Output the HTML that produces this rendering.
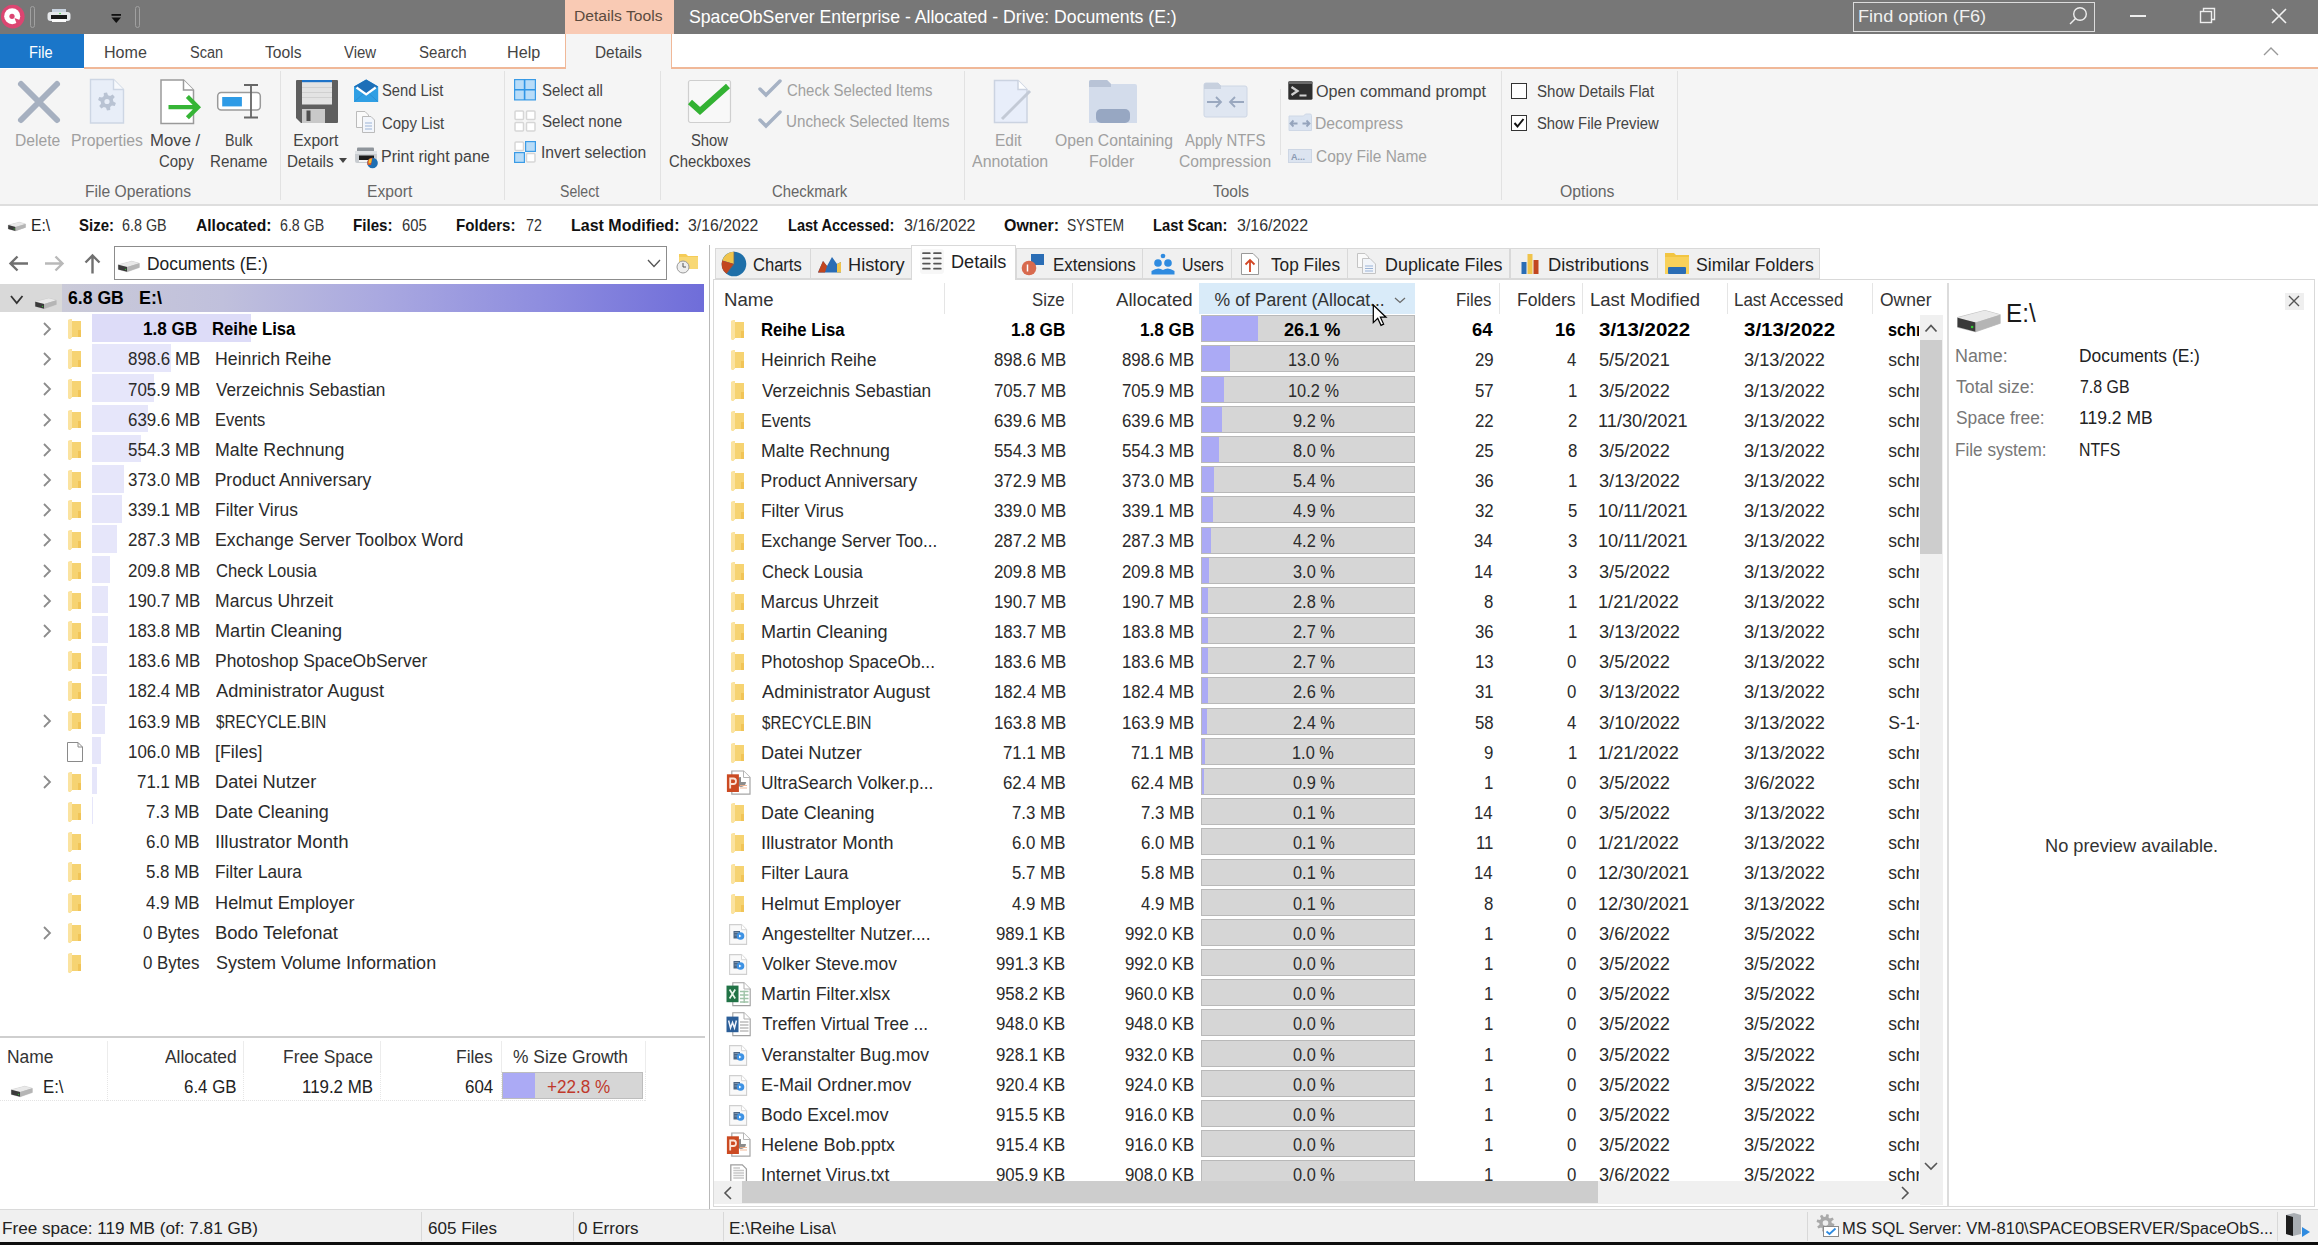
<!DOCTYPE html><html><head><meta charset="utf-8"><style>
*{box-sizing:border-box}
html,body{margin:0;padding:0}
body{width:2318px;height:1245px;position:relative;overflow:hidden;background:#fff;font-family:"Liberation Sans",sans-serif;color:#1a1a1a}
.a{position:absolute}
.t{position:absolute;white-space:nowrap;line-height:1}
svg{position:absolute;overflow:visible}
</style></head><body>
<div class="a" style="left:0px;top:0px;width:2318px;height:34px;background:#777777"></div>
<svg style="left:0px;top:1px" width="28" height="30" viewBox="0 0 28 30"><circle cx="12.8" cy="15.6" r="11.8" fill="#dc4571"/><circle cx="12.2" cy="15.2" r="8" fill="#fff"/><circle cx="12" cy="15.3" r="2.6" fill="#dc4571"/><path d="M14.5 17 L21 19.5 L17 23.5 Z" fill="#dc4571"/></svg>
<div class="a" style="left:30px;top:6px;width:4.5px;height:22px;border:1px solid #a0a0a0;border-radius:2.5px"></div>
<svg style="left:47px;top:8px" width="24" height="17" viewBox="0 0 24 17"><rect x="5" y="1" width="14" height="4" fill="#c9d3df"/><rect x="0.5" y="4" width="23" height="9" rx="3" fill="#e6e8eb"/><rect x="4" y="7" width="16" height="4" fill="#1b1b1b"/><rect x="5" y="11" width="14" height="3" fill="#fafafa"/><circle cx="13" cy="5.5" r="0.8" fill="#3c3"/></svg>
<svg style="left:111px;top:14px" width="11" height="10" viewBox="0 0 11 10"><rect x="0.5" y="0" width="9.5" height="1.8" fill="#111"/><path d="M0.5 3.5 H10 L5.25 9 Z" fill="#111"/></svg>
<div class="a" style="left:135px;top:6px;width:4.5px;height:22px;border:1px solid #a0a0a0;border-radius:2.5px"></div>
<div class="a" style="left:565px;top:0px;width:109px;height:34px;background:#f9cab4"></div>
<div class="t" style="left:574.28px;top:8.25px;font-size:15.3px;color:#5b4a3e;transform:scaleX(1.0236);transform-origin:0 0;">Details Tools</div>
<div class="t" style="left:689.30px;top:8.39px;font-size:18.2px;color:#ffffff;transform:scaleX(0.9709);transform-origin:0 0;">SpaceObServer Enterprise - Allocated - Drive: Documents (E:)</div>
<div class="a" style="left:1853px;top:2px;width:242px;height:30px;border:1.3px solid #dcdcdc"></div>
<div class="t" style="left:1857.94px;top:7.64px;font-size:17.2px;color:#f0f0f0;transform:scaleX(1.0561);transform-origin:0 0;">Find option (F6)</div>
<svg style="left:2068px;top:6px" width="20" height="20" viewBox="0 0 20 20"><circle cx="12" cy="8" r="6.3" fill="none" stroke="#eee" stroke-width="1.4"/><path d="M7.5 12.5 L2 18" stroke="#eee" stroke-width="1.4"/></svg>
<div class="a" style="left:2130px;top:15px;width:16px;height:1.5px;background:#eee"></div>
<svg style="left:2199px;top:7px" width="18" height="18" viewBox="0 0 18 18"><rect x="1.5" y="4.5" width="11" height="11" fill="none" stroke="#eee" stroke-width="1.4"/><path d="M4.5 4.5 V1.5 H15.5 V12.5 H12.5" fill="none" stroke="#eee" stroke-width="1.4"/></svg>
<svg style="left:2270px;top:7px" width="18" height="18" viewBox="0 0 18 18"><path d="M2 2 L16 16 M16 2 L2 16" stroke="#f2f2f2" stroke-width="1.6"/></svg>
<div class="a" style="left:0px;top:34px;width:2318px;height:34px;background:#ffffff"></div>
<div class="a" style="left:0px;top:34px;width:84px;height:34px;background:#1a76c9"></div>
<div class="t" style="left:29.29px;top:45.16px;font-size:16px;color:#ffffff;transform:scaleX(0.9123);transform-origin:0 0;">File</div>
<div class="t" style="left:104.09px;top:45.16px;font-size:16px;color:#444444;transform:scaleX(1.0052);transform-origin:0 0;">Home</div>
<div class="t" style="left:189.70px;top:45.16px;font-size:16px;color:#444444;transform:scaleX(0.9081);transform-origin:0 0;">Scan</div>
<div class="t" style="left:264.90px;top:45.16px;font-size:16px;color:#444444;transform:scaleX(0.9772);transform-origin:0 0;">Tools</div>
<div class="t" style="left:344.30px;top:45.16px;font-size:16px;color:#444444;transform:scaleX(0.9358);transform-origin:0 0;">View</div>
<div class="t" style="left:419.20px;top:45.16px;font-size:16px;color:#444444;transform:scaleX(0.9398);transform-origin:0 0;">Search</div>
<div class="t" style="left:507.29px;top:45.16px;font-size:16px;color:#444444;transform:scaleX(1.0091);transform-origin:0 0;">Help</div>
<div class="a" style="left:84px;top:67.4px;width:481px;height:1.3px;background:#f0b898"></div>
<div class="a" style="left:672px;top:67.4px;width:1646px;height:1.3px;background:#f0b898"></div>
<div class="a" style="left:565px;top:34px;width:107px;height:35px;background:#f5f5f5;border-left:1px solid #f0b898;border-right:1px solid #f0b898"></div>
<div class="t" style="left:594.54px;top:45.16px;font-size:16px;color:#444444;transform:scaleX(0.9602);transform-origin:0 0;">Details</div>
<svg style="left:2263px;top:46.5px" width="16" height="9"><path d="M1 8 L8 1 L15 8" fill="none" stroke="#999" stroke-width="1.4"/></svg>
<div class="a" style="left:0px;top:69px;width:2318px;height:135px;background:#f5f5f5"></div>
<div class="a" style="left:0px;top:204px;width:2318px;height:1.5px;background:#dedede"></div>
<div class="a" style="left:279.5px;top:71px;width:1px;height:129px;background:#e2e2e2"></div>
<div class="a" style="left:503.8px;top:71px;width:1px;height:129px;background:#e2e2e2"></div>
<div class="a" style="left:659.5px;top:71px;width:1px;height:129px;background:#e2e2e2"></div>
<div class="a" style="left:964.3px;top:71px;width:1px;height:129px;background:#e2e2e2"></div>
<div class="a" style="left:1501px;top:71px;width:1px;height:129px;background:#e2e2e2"></div>
<div class="a" style="left:1677.2px;top:71px;width:1px;height:129px;background:#e2e2e2"></div>
<div class="a" style="left:1280px;top:89px;width:1px;height:66px;background:#e2e2e2"></div>
<div class="t" style="left:85.20px;top:183.59px;font-size:15.6px;color:#666666;transform:scaleX(1.0034);transform-origin:0 0;">File Operations</div>
<div class="t" style="left:366.50px;top:183.59px;font-size:15.6px;color:#666666;transform:scaleX(1.0037);transform-origin:0 0;">Export</div>
<div class="t" style="left:559.90px;top:183.59px;font-size:15.6px;color:#666666;transform:scaleX(0.9021);transform-origin:0 0;">Select</div>
<div class="t" style="left:772.40px;top:183.59px;font-size:15.6px;color:#666666;transform:scaleX(0.9550);transform-origin:0 0;">Checkmark</div>
<div class="t" style="left:1212.70px;top:183.59px;font-size:15.6px;color:#666666;transform:scaleX(0.9917);transform-origin:0 0;">Tools</div>
<div class="t" style="left:1560.30px;top:183.59px;font-size:15.6px;color:#666666;transform:scaleX(1.0140);transform-origin:0 0;">Options</div>
<svg style="left:17px;top:80px" width="44" height="44" viewBox="0 0 44 44"><path d="M4 4 L40 40 M40 4 L4 40" stroke="#a6b0c0" stroke-width="6" stroke-linecap="round"/></svg>
<div class="t" style="left:15.00px;top:132.79px;font-size:15.6px;color:#a0a0a0;transform:scaleX(1.0022);transform-origin:0 0;">Delete</div>
<svg style="left:89px;top:78px" width="37" height="47" viewBox="0 0 37 47"><path d="M1.5 1.5 H24.5 L34.5 11.5 V45 H1.5 Z" fill="#e8eef8" stroke="#cdd6e4" stroke-width="1.4"/><path d="M24.5 1.5 V11.5 H34.5" fill="#f7f9fc" stroke="#cdd6e4" stroke-width="1.4"/><path d="M24.30 23.50 L26.89 24.91 L25.79 28.00 L22.90 27.46 L21.15 28.96 L21.23 31.90 L18.00 32.50 L17.01 29.72 L14.85 28.96 L12.34 30.49 L10.21 28.00 L12.12 25.76 L11.70 23.50 L9.11 22.09 L10.21 19.00 L13.10 19.54 L14.85 18.04 L14.77 15.10 L18.00 14.50 L18.99 17.28 L21.15 18.04 L23.66 16.51 L25.79 19.00 L23.88 21.24 Z M20.60 23.50 A2.6 2.6 0 1 0 15.40 23.50 A2.6 2.6 0 1 0 20.60 23.50 Z" fill="#b9c3d3" fill-rule="evenodd"/></svg>
<div class="t" style="left:70.69px;top:132.79px;font-size:15.6px;color:#a0a0a0;transform:scaleX(1.0103);transform-origin:0 0;">Properties</div>
<svg style="left:159px;top:78px" width="44" height="47" viewBox="0 0 44 47"><path d="M2 2 H24.5 L34.5 12 V45.5 H2 Z" fill="#ffffff" stroke="#9a9a9a" stroke-width="1.5"/><path d="M24.5 2 V12 H34.5" fill="#fff" stroke="#9a9a9a" stroke-width="1.5"/><path d="M9.5 29.2 H39 M28.4 18.6 L39 29.2 L28.4 39.8" fill="none" stroke="#36b536" stroke-width="4.3" stroke-linejoin="miter"/></svg>
<div class="t" style="left:150.43px;top:132.79px;font-size:15.6px;color:#444444;transform:scaleX(1.0739);transform-origin:0 0;">Move /</div>
<div class="t" style="left:158.70px;top:153.59px;font-size:15.6px;color:#444444;transform:scaleX(0.9589);transform-origin:0 0;">Copy</div>
<svg style="left:216px;top:84px" width="46" height="36" viewBox="0 0 46 36"><rect x="1.7" y="8.5" width="42.6" height="17.6" rx="3.5" fill="#fff" stroke="#9a9a9a" stroke-width="1.5"/><rect x="6.2" y="13" width="19.7" height="9.4" fill="#2e9be6"/><path d="M28 1 H42 M35 1 V33.5 M28 33.5 H42" stroke="#666" stroke-width="1.8"/></svg>
<div class="t" style="left:224.59px;top:132.79px;font-size:15.6px;color:#444444;transform:scaleX(0.9141);transform-origin:0 0;">Bulk</div>
<div class="t" style="left:209.63px;top:153.59px;font-size:15.6px;color:#444444;transform:scaleX(0.9726);transform-origin:0 0;">Rename</div>
<svg style="left:296px;top:80px" width="42" height="43" viewBox="0 0 42 43"><path d="M0 1 Q0 0 1 0 H41 Q42 0 42 1 V42 Q42 43 41 43 H5 L0 38 Z" fill="#5e5e5e"/><rect x="6" y="0.5" width="30" height="24" fill="#e3e3e3"/><rect x="6" y="0" width="30" height="2.2" fill="#1e73c8"/><path d="M6 7.5 H36 M6 12.5 H36 M6 17.5 H36" stroke="#d0d0d0" stroke-width="1.2"/><rect x="6" y="29" width="23" height="14" fill="#c9c9c9"/><rect x="10.5" y="30.5" width="4" height="10.5" fill="#4e4e4e"/></svg>
<div class="t" style="left:293.20px;top:132.79px;font-size:15.6px;color:#444444;">Export</div>
<div class="t" style="left:287.02px;top:153.59px;font-size:15.6px;color:#444444;transform:scaleX(0.9772);transform-origin:0 0;">Details</div>
<svg style="left:339px;top:158px" width="9" height="6" viewBox="0 0 9 6"><path d="M0 0 H8 L4 5 Z" fill="#444"/></svg>
<svg style="left:354px;top:79px" width="25" height="24" viewBox="0 0 25 24"><path d="M0 7.5 L12.2 0.5 L24.2 7.5 V23 H0 Z" fill="#2f9fe4"/><path d="M0 7.5 L12.2 0.5 L24.2 7.5 L12.2 14 Z" fill="#1d6fb8"/><path d="M2.5 8.5 L12.2 15.5 L21.7 8.5" fill="none" stroke="#ffffff" stroke-width="2.2"/><path d="M0.5 22.5 L9 15 M23.7 22.5 L15.5 15" stroke="#2a8fd3" stroke-width="1"/></svg>
<div class="t" style="left:382.20px;top:83.39px;font-size:15.6px;color:#444444;transform:scaleX(0.9454);transform-origin:0 0;">Send List</div>
<svg style="left:355px;top:110px" width="22" height="24" viewBox="0 0 22 24"><path d="M1.5 1.5 H10 L13.5 5 V17.5 H1.5 Z" fill="#fafafa" stroke="#bbb"/><path d="M7.5 6.5 H16 L19.5 10 V22.5 H7.5 Z" fill="#f3f6fb" stroke="#bbb"/><path d="M10 13 H17 M10 16 H17 M10 19 H17" stroke="#9bb3d6"/></svg>
<div class="t" style="left:382.20px;top:116.29px;font-size:15.6px;color:#444444;transform:scaleX(0.9578);transform-origin:0 0;">Copy List</div>
<svg style="left:354px;top:146px" width="26" height="23" viewBox="0 0 26 23"><rect x="3" y="1.5" width="17" height="5" rx="1" fill="#8f959b"/><rect x="1" y="5" width="22" height="12" rx="2" fill="#c8ccd0"/><rect x="1" y="5" width="22" height="3" fill="#dfe2e5"/><rect x="5" y="9.5" width="15" height="4.5" fill="#1c1c1c"/><rect x="5" y="14" width="14" height="2" fill="#f4f4f4"/><circle cx="18.5" cy="17" r="5.3" fill="#1f6fb2"/><path d="M18.5 11.7 A5.3 5.3 0 0 0 13.6 19 L17 19 Z" fill="#d9532c"/><path d="M15 13.5 L18 12.5 L17 17 L14.5 17.5 Z" fill="#f2c230"/></svg>
<div class="t" style="left:381.17px;top:148.89px;font-size:15.6px;color:#444444;transform:scaleX(1.0281);transform-origin:0 0;">Print right pane</div>
<svg style="left:514px;top:79px" width="22" height="21.5" viewBox="0 0 22 21.5"><rect x="0.6" y="0.6" width="20.8" height="20.3" fill="#b8dcf8" stroke="#3a9be6" stroke-width="1.2"/><path d="M10.6 0.6 V21 M0.6 10.7 H21.4" stroke="#2f95e6" stroke-width="1.6"/></svg>
<div class="t" style="left:541.80px;top:82.69px;font-size:15.6px;color:#444444;transform:scaleX(0.9616);transform-origin:0 0;">Select all</div>
<svg style="left:514px;top:110px" width="22" height="22" viewBox="0 0 22 22"><rect x="1" y="1" width="8.5" height="8.5" rx="1" fill="#fff" stroke="#d6d6d6" stroke-width="1.5"/><rect x="12.5" y="1" width="8.5" height="8.5" rx="1" fill="#fff" stroke="#d6d6d6" stroke-width="1.5"/><rect x="1" y="12.5" width="8.5" height="8.5" rx="1" fill="#fff" stroke="#d6d6d6" stroke-width="1.5"/><rect x="12.5" y="12.5" width="8.5" height="8.5" rx="1" fill="#fff" stroke="#d6d6d6" stroke-width="1.5"/></svg>
<div class="t" style="left:541.80px;top:114.39px;font-size:15.6px;color:#444444;transform:scaleX(0.9720);transform-origin:0 0;">Select none</div>
<svg style="left:514px;top:141px" width="22" height="22" viewBox="0 0 22 22"><rect x="1" y="1" width="8.5" height="8.5" rx="1" fill="#fff" stroke="#d6d6d6" stroke-width="1.5"/><rect x="11.6" y="0.6" width="9.8" height="9.8" fill="#b8dcf8" stroke="#3a9be6" stroke-width="1.2"/><rect x="0.6" y="11.6" width="9.8" height="9.8" fill="#b8dcf8" stroke="#3a9be6" stroke-width="1.2"/><rect x="12.5" y="12.5" width="8.5" height="8.5" rx="1" fill="#fff" stroke="#d6d6d6" stroke-width="1.5"/></svg>
<div class="t" style="left:540.80px;top:145.39px;font-size:15.6px;color:#444444;transform:scaleX(1.0029);transform-origin:0 0;">Invert selection</div>
<svg style="left:687px;top:79px" width="46" height="46" viewBox="0 0 46 46"><rect x="1.5" y="1.5" width="42" height="42" rx="2" fill="#f8f8f8" stroke="#cfcfcf" stroke-width="1.2"/><path d="M3 23 L13 32 L41 7" fill="none" stroke="#33b233" stroke-width="6"/></svg>
<div class="t" style="left:690.60px;top:132.79px;font-size:15.6px;color:#444444;transform:scaleX(0.9485);transform-origin:0 0;">Show</div>
<div class="t" style="left:668.50px;top:153.59px;font-size:15.6px;color:#444444;transform:scaleX(0.9522);transform-origin:0 0;">Checkboxes</div>
<svg style="left:758px;top:78px" width="24" height="20" viewBox="0 0 24 20"><path d="M2 11 L8 17 L22 3" fill="none" stroke="#a6b2c4" stroke-width="3.5" stroke-linecap="round"/></svg>
<div class="t" style="left:787.00px;top:82.89px;font-size:15.6px;color:#a0a0a0;transform:scaleX(0.9587);transform-origin:0 0;">Check Selected Items</div>
<svg style="left:758px;top:109px" width="24" height="20" viewBox="0 0 24 20"><path d="M2 11 L8 17 L22 3" fill="none" stroke="#a6b2c4" stroke-width="3.5" stroke-linecap="round"/></svg>
<div class="t" style="left:786.03px;top:113.89px;font-size:15.6px;color:#a0a0a0;transform:scaleX(0.9722);transform-origin:0 0;">Uncheck Selected Items</div>
<svg style="left:993px;top:79px" width="42" height="46" viewBox="0 0 42 46"><path d="M1.5 1.5 H25 L34 10.5 V43.5 H1.5 Z" fill="#e8eefa" stroke="#cbd3e1" stroke-width="1.5"/><path d="M25 1.5 V10.5 H34" fill="#fff" stroke="#cbd3e1" stroke-width="1.5"/><path d="M9 40 L37 12" stroke="#c3cad6" stroke-width="3"/></svg>
<div class="t" style="left:995.31px;top:132.79px;font-size:15.6px;color:#a0a0a0;transform:scaleX(0.9910);transform-origin:0 0;">Edit</div>
<div class="t" style="left:972.10px;top:153.59px;font-size:15.6px;color:#a0a0a0;transform:scaleX(1.0218);transform-origin:0 0;">Annotation</div>
<svg style="left:1088px;top:79px" width="50" height="46" viewBox="0 0 50 46"><path d="M1 3 Q1 1 3 1 H19 L23 5 H47 Q49 5 49 7 V44 H1 Z" fill="#d3dceb"/><path d="M1 3 Q1 1 3 1 H19 L23 5 V8 H1 Z" fill="#b8c3d6"/><rect x="8" y="30" width="34" height="14" rx="5" fill="#97a7c2"/></svg>
<div class="t" style="left:1054.70px;top:132.79px;font-size:15.6px;color:#a0a0a0;transform:scaleX(1.0089);transform-origin:0 0;">Open Containing</div>
<div class="t" style="left:1089.27px;top:153.59px;font-size:15.6px;color:#a0a0a0;transform:scaleX(1.0254);transform-origin:0 0;">Folder</div>
<svg style="left:1203px;top:82px" width="45" height="36" viewBox="0 0 45 36"><path d="M1 3 Q1 1 3 1 H15 L18 4 H42 Q44 4 44 6 V33 Q44 35 42 35 H3 Q1 35 1 33 Z" fill="#dfe6f1" stroke="#cdd6e4"/><path d="M1 3 Q1 1 3 1 H15 L18 4 V7 H1 Z" fill="#c7d0de"/><path d="M4 20 H18 M13 15 L18 20 L13 25 M41 20 H27 M32 15 L27 20 L32 25" fill="none" stroke="#9aa8bf" stroke-width="1.8"/></svg>
<div class="t" style="left:1184.70px;top:132.79px;font-size:15.6px;color:#a0a0a0;transform:scaleX(0.9563);transform-origin:0 0;">Apply NTFS</div>
<div class="t" style="left:1179.20px;top:153.59px;font-size:15.6px;color:#a0a0a0;transform:scaleX(1.0023);transform-origin:0 0;">Compression</div>
<svg style="left:1288px;top:81px" width="25" height="19" viewBox="0 0 25 19"><rect x="0.3" y="0.3" width="24.2" height="18.4" rx="1.5" fill="#2e2e2e"/><rect x="0.3" y="0.3" width="24.2" height="2.6" rx="1" fill="#6a6a6a"/><path d="M3.5 6 L9.5 10 L3.5 14" fill="none" stroke="#d0d0d0" stroke-width="2.3"/><path d="M11.5 14.5 H18.5" stroke="#d0d0d0" stroke-width="2"/></svg>
<div class="t" style="left:1316.40px;top:83.69px;font-size:15.6px;color:#444444;transform:scaleX(1.0372);transform-origin:0 0;">Open command prompt</div>
<svg style="left:1288px;top:113px" width="25" height="19" viewBox="0 0 25 19"><path d="M1 3 H15.5 L17.5 1 H22 Q23.5 1 23.5 2.5 V17.5 H1 Z" fill="#dbe4f1" stroke="#cfd8e6"/><path d="M2.5 10.5 H9.5 M5.5 7.5 L2.5 10.5 L5.5 13.5 M21.5 10.5 H14.5 M18.5 7.5 L21.5 10.5 L18.5 13.5" fill="none" stroke="#95a4bc" stroke-width="1.8"/></svg>
<div class="t" style="left:1315.39px;top:116.19px;font-size:15.6px;color:#a0a0a0;transform:scaleX(1.0054);transform-origin:0 0;">Decompress</div>
<svg style="left:1288px;top:149px" width="25" height="14" viewBox="0 0 25 14"><rect x="0.5" y="0.5" width="23" height="13" fill="#dce4f0" stroke="#cdd6e4"/><text x="3" y="11" font-family="Liberation Sans" font-size="9" font-weight="bold" fill="#8a9ab3">A...</text></svg>
<div class="t" style="left:1316.40px;top:148.69px;font-size:15.6px;color:#a0a0a0;transform:scaleX(0.9926);transform-origin:0 0;">Copy File Name</div>
<div class="a" style="left:1511px;top:82.5px;width:16px;height:16px;border:1.3px solid #333;background:#fff"></div>
<div class="t" style="left:1537.10px;top:83.69px;font-size:15.6px;color:#444444;transform:scaleX(0.9656);transform-origin:0 0;">Show Details Flat</div>
<div class="a" style="left:1511px;top:115px;width:16px;height:16px;border:1.3px solid #333;background:#fff"></div>
<svg style="left:1513px;top:117px" width="12" height="12" viewBox="0 0 12 12"><path d="M1.5 6 L4.5 9.5 L10.5 2" fill="none" stroke="#111" stroke-width="2"/></svg>
<div class="t" style="left:1537.10px;top:116.19px;font-size:15.6px;color:#444444;transform:scaleX(0.9488);transform-origin:0 0;">Show File Preview</div>
<svg style="left:8px;top:221.5px" width="17.76" height="9.25" viewBox="0 0 24 12.5"><path d="M0.3 4.2 L15.3 0.3 L23.7 2.6 V7.3 L10.2 12 L0.3 9.4 Z" fill="#c4c4c4" stroke="#c4c4c4" stroke-width="0.6" stroke-linejoin="round"/><path d="M0.3 4.2 L15.3 0.3 L23.7 2.6 L10.2 6.8 Z" fill="#e9e9e9"/><path d="M0.3 4.2 L10.2 6.8 V12 L0.3 9.4 Z" fill="#3a3a3a"/><path d="M10.2 6.8 L23.7 2.6 V7.3 L10.2 12 Z" fill="#b5b5b5"/><circle cx="8.3" cy="9.3" r="0.7" fill="#3c3"/></svg>
<div class="t" style="left:31.00px;top:218.41px;font-size:15.7px;color:#222;">E:\</div>
<div class="t" style="left:78.50px;top:218.41px;font-size:15.7px;color:#111;font-weight:bold;transform:scaleX(0.9551);transform-origin:0 0;">Size:</div>
<div class="t" style="left:122.00px;top:218.41px;font-size:15.7px;color:#333;transform:scaleX(0.9138);transform-origin:0 0;">6.8 GB</div>
<div class="t" style="left:195.70px;top:218.41px;font-size:15.7px;color:#111;font-weight:bold;transform:scaleX(0.9945);transform-origin:0 0;">Allocated:</div>
<div class="t" style="left:280.30px;top:218.41px;font-size:15.7px;color:#333;transform:scaleX(0.9076);transform-origin:0 0;">6.8 GB</div>
<div class="t" style="left:353.03px;top:218.41px;font-size:15.7px;color:#111;font-weight:bold;transform:scaleX(0.9652);transform-origin:0 0;">Files:</div>
<div class="t" style="left:402.30px;top:218.41px;font-size:15.7px;color:#333;transform:scaleX(0.9414);transform-origin:0 0;">605</div>
<div class="t" style="left:456.24px;top:218.41px;font-size:15.7px;color:#111;font-weight:bold;transform:scaleX(0.9621);transform-origin:0 0;">Folders:</div>
<div class="t" style="left:526.10px;top:218.41px;font-size:15.7px;color:#333;transform:scaleX(0.9029);transform-origin:0 0;">72</div>
<div class="t" style="left:570.78px;top:218.41px;font-size:15.7px;color:#111;font-weight:bold;transform:scaleX(1.0202);transform-origin:0 0;">Last Modified:</div>
<div class="t" style="left:688.40px;top:218.41px;font-size:15.7px;color:#333;transform:scaleX(1.0077);transform-origin:0 0;">3/16/2022</div>
<div class="t" style="left:788.07px;top:218.41px;font-size:15.7px;color:#111;font-weight:bold;transform:scaleX(0.9285);transform-origin:0 0;">Last Accessed:</div>
<div class="t" style="left:904.00px;top:218.41px;font-size:15.7px;color:#333;transform:scaleX(1.0251);transform-origin:0 0;">3/16/2022</div>
<div class="t" style="left:1004.00px;top:218.41px;font-size:15.7px;color:#111;font-weight:bold;transform:scaleX(1.0167);transform-origin:0 0;">Owner:</div>
<div class="t" style="left:1067.00px;top:218.41px;font-size:15.7px;color:#333;transform:scaleX(0.8828);transform-origin:0 0;">SYSTEM</div>
<div class="t" style="left:1152.66px;top:218.41px;font-size:15.7px;color:#111;font-weight:bold;transform:scaleX(0.9389);transform-origin:0 0;">Last Scan:</div>
<div class="t" style="left:1236.50px;top:218.41px;font-size:15.7px;color:#333;transform:scaleX(1.0193);transform-origin:0 0;">3/16/2022</div>
<svg style="left:8px;top:254px" width="21" height="19" viewBox="0 0 21 19"><path d="M20 9.5 H3 M9.5 2.5 L2.5 9.5 L9.5 16.5" fill="none" stroke="#707070" stroke-width="2.4"/></svg>
<svg style="left:44px;top:254px" width="21" height="19" viewBox="0 0 21 19"><path d="M1 9.5 H18 M11.5 2.5 L18.5 9.5 L11.5 16.5" fill="none" stroke="#b9b9b9" stroke-width="2.4"/></svg>
<svg style="left:83px;top:253px" width="19" height="21" viewBox="0 0 19 21"><path d="M9.5 20.5 V3 M2.5 9.5 L9.5 2.5 L16.5 9.5" fill="none" stroke="#707070" stroke-width="2.4"/></svg>
<div class="a" style="left:114px;top:245.5px;width:553px;height:34.5px;border:1.3px solid #8c8c8c;background:#fff"></div>
<svg style="left:118px;top:261px" width="21.6" height="11.25" viewBox="0 0 24 12.5"><path d="M0.3 4.2 L15.3 0.3 L23.7 2.6 V7.3 L10.2 12 L0.3 9.4 Z" fill="#c4c4c4" stroke="#c4c4c4" stroke-width="0.6" stroke-linejoin="round"/><path d="M0.3 4.2 L15.3 0.3 L23.7 2.6 L10.2 6.8 Z" fill="#e9e9e9"/><path d="M0.3 4.2 L10.2 6.8 V12 L0.3 9.4 Z" fill="#3a3a3a"/><path d="M10.2 6.8 L23.7 2.6 V7.3 L10.2 12 Z" fill="#b5b5b5"/><circle cx="8.3" cy="9.3" r="0.7" fill="#3c3"/></svg>
<div class="t" style="left:147.11px;top:255.59px;font-size:17.5px;color:#222;transform:scaleX(0.9939);transform-origin:0 0;">Documents (E:)</div>
<svg style="left:647px;top:259px" width="14" height="8.5" viewBox="0 0 14 8.5"><path d="M1 1 L7.0 7.5 L13 1" fill="none" stroke="#555" stroke-width="1.3"/></svg>
<svg style="left:676px;top:252px" width="24" height="22" viewBox="0 0 24 22"><path d="M3 2 H10 L12 4 H22 V17 H3 Z" fill="#f5cc58"/><rect x="3" y="5" width="19" height="12" fill="#f8d874"/><circle cx="7" cy="15" r="6" fill="#eee" stroke="#999" stroke-width="1"/><path d="M7 11 V15 H10" fill="none" stroke="#555" stroke-width="1"/></svg>
<div class="a" style="left:708.7px;top:245px;width:1.2px;height:965px;background:#b9b9b9"></div>
<div class="a" style="left:0px;top:283.6px;width:704px;height:28.4px;background:#d9d9d9"></div>
<div class="a" style="left:62px;top:283.6px;width:642px;height:28.4px;background:linear-gradient(to right,#cacad8 0%,#c0c0dc 25%,#a9a8e0 50%,#8e8ddf 75%,#6f6dd9 100%)"></div>
<svg style="left:9.5px;top:294.5px" width="13.5" height="9" viewBox="0 0 13.5 9"><path d="M1 1 L6.75 8 L12.5 1" fill="none" stroke="#333" stroke-width="1.8"/></svg>
<svg style="left:35px;top:297.5px" width="21.6" height="11.25" viewBox="0 0 24 12.5"><path d="M0.3 4.2 L15.3 0.3 L23.7 2.6 V7.3 L10.2 12 L0.3 9.4 Z" fill="#c4c4c4" stroke="#c4c4c4" stroke-width="0.6" stroke-linejoin="round"/><path d="M0.3 4.2 L15.3 0.3 L23.7 2.6 L10.2 6.8 Z" fill="#e9e9e9"/><path d="M0.3 4.2 L10.2 6.8 V12 L0.3 9.4 Z" fill="#3a3a3a"/><path d="M10.2 6.8 L23.7 2.6 V7.3 L10.2 12 Z" fill="#b5b5b5"/><circle cx="8.3" cy="9.3" r="0.7" fill="#3c3"/></svg>
<div class="t" style="left:68.20px;top:290.29px;font-size:17.5px;color:#000;font-weight:bold;transform:scaleX(1.0073);transform-origin:0 0;">6.8 GB</div>
<div class="t" style="left:138.78px;top:290.29px;font-size:17.5px;color:#000;font-weight:bold;transform:scaleX(1.0233);transform-origin:0 0;">E:\</div>
<div class="a" style="left:92px;top:314.1px;width:159px;height:27.5px;background:#dddcf8"></div>
<svg style="left:42px;top:321.1px" width="10" height="16" viewBox="0 0 10 16"><path d="M2 2 L8 8 L2 14" fill="none" stroke="#8c8c8c" stroke-width="1.8"/></svg>
<svg style="left:67px;top:318.1px" width="16" height="22" viewBox="0 0 16 22"><path d="M1 2 L5 1 L5 3 L14 3 L14 19 L5 19 L3 21 L1 20 Z" fill="#f4cf66"/><path d="M1 2 L5 1 L5 19 L3 21 L1 20 Z" fill="#fbe3a0"/><rect x="5" y="3" width="9" height="16" fill="#f6d372"/><rect x="11" y="12" width="3" height="7" fill="#f1c457"/></svg>
<div class="t" style="left:143.49px;top:321.19px;font-size:17.5px;color:#000;font-weight:bold;transform:scaleX(0.9800);transform-origin:0 0;">1.8 GB</div>
<div class="t" style="left:212.35px;top:321.19px;font-size:17.5px;color:#000;font-weight:bold;transform:scaleX(0.9527);transform-origin:0 0;">Reihe Lisa</div>
<div class="a" style="left:92px;top:344.28px;width:79.3px;height:27.5px;background:#e6e6fa"></div>
<svg style="left:42px;top:351.28px" width="10" height="16" viewBox="0 0 10 16"><path d="M2 2 L8 8 L2 14" fill="none" stroke="#8c8c8c" stroke-width="1.8"/></svg>
<svg style="left:67px;top:348.28px" width="16" height="22" viewBox="0 0 16 22"><path d="M1 2 L5 1 L5 3 L14 3 L14 19 L5 19 L3 21 L1 20 Z" fill="#f4cf66"/><path d="M1 2 L5 1 L5 19 L3 21 L1 20 Z" fill="#fbe3a0"/><rect x="5" y="3" width="9" height="16" fill="#f6d372"/><rect x="11" y="12" width="3" height="7" fill="#f1c457"/></svg>
<div class="t" style="left:127.67px;top:351.37px;font-size:17.5px;color:#2b2b2b;transform:scaleX(0.9650);transform-origin:0 0;">898.6 MB</div>
<div class="t" style="left:214.69px;top:351.37px;font-size:17.5px;color:#2b2b2b;transform:scaleX(1.0129);transform-origin:0 0;">Heinrich Reihe</div>
<div class="a" style="left:92px;top:374.46px;width:62px;height:27.5px;background:#e6e6fa"></div>
<svg style="left:42px;top:381.46px" width="10" height="16" viewBox="0 0 10 16"><path d="M2 2 L8 8 L2 14" fill="none" stroke="#8c8c8c" stroke-width="1.8"/></svg>
<svg style="left:67px;top:378.46px" width="16" height="22" viewBox="0 0 16 22"><path d="M1 2 L5 1 L5 3 L14 3 L14 19 L5 19 L3 21 L1 20 Z" fill="#f4cf66"/><path d="M1 2 L5 1 L5 19 L3 21 L1 20 Z" fill="#fbe3a0"/><rect x="5" y="3" width="9" height="16" fill="#f6d372"/><rect x="11" y="12" width="3" height="7" fill="#f1c457"/></svg>
<div class="t" style="left:127.67px;top:381.55px;font-size:17.5px;color:#2b2b2b;transform:scaleX(0.9650);transform-origin:0 0;">705.9 MB</div>
<div class="t" style="left:215.70px;top:381.55px;font-size:17.5px;color:#2b2b2b;transform:scaleX(0.9833);transform-origin:0 0;">Verzeichnis Sebastian</div>
<div class="a" style="left:92px;top:404.64px;width:56.4px;height:27.5px;background:#e6e6fa"></div>
<svg style="left:42px;top:411.64px" width="10" height="16" viewBox="0 0 10 16"><path d="M2 2 L8 8 L2 14" fill="none" stroke="#8c8c8c" stroke-width="1.8"/></svg>
<svg style="left:67px;top:408.64px" width="16" height="22" viewBox="0 0 16 22"><path d="M1 2 L5 1 L5 3 L14 3 L14 19 L5 19 L3 21 L1 20 Z" fill="#f4cf66"/><path d="M1 2 L5 1 L5 19 L3 21 L1 20 Z" fill="#fbe3a0"/><rect x="5" y="3" width="9" height="16" fill="#f6d372"/><rect x="11" y="12" width="3" height="7" fill="#f1c457"/></svg>
<div class="t" style="left:127.67px;top:411.73px;font-size:17.5px;color:#2b2b2b;transform:scaleX(0.9650);transform-origin:0 0;">639.6 MB</div>
<div class="t" style="left:214.76px;top:411.73px;font-size:17.5px;color:#2b2b2b;transform:scaleX(0.9384);transform-origin:0 0;">Events</div>
<div class="a" style="left:92px;top:434.82px;width:49.3px;height:27.5px;background:#e6e6fa"></div>
<svg style="left:42px;top:441.82px" width="10" height="16" viewBox="0 0 10 16"><path d="M2 2 L8 8 L2 14" fill="none" stroke="#8c8c8c" stroke-width="1.8"/></svg>
<svg style="left:67px;top:438.82px" width="16" height="22" viewBox="0 0 16 22"><path d="M1 2 L5 1 L5 3 L14 3 L14 19 L5 19 L3 21 L1 20 Z" fill="#f4cf66"/><path d="M1 2 L5 1 L5 19 L3 21 L1 20 Z" fill="#fbe3a0"/><rect x="5" y="3" width="9" height="16" fill="#f6d372"/><rect x="11" y="12" width="3" height="7" fill="#f1c457"/></svg>
<div class="t" style="left:127.67px;top:441.91px;font-size:17.5px;color:#2b2b2b;transform:scaleX(0.9650);transform-origin:0 0;">554.3 MB</div>
<div class="t" style="left:214.68px;top:441.91px;font-size:17.5px;color:#2b2b2b;transform:scaleX(1.0151);transform-origin:0 0;">Malte Rechnung</div>
<div class="a" style="left:92px;top:465.0px;width:32px;height:27.5px;background:#e6e6fa"></div>
<svg style="left:42px;top:472.0px" width="10" height="16" viewBox="0 0 10 16"><path d="M2 2 L8 8 L2 14" fill="none" stroke="#8c8c8c" stroke-width="1.8"/></svg>
<svg style="left:67px;top:469.0px" width="16" height="22" viewBox="0 0 16 22"><path d="M1 2 L5 1 L5 3 L14 3 L14 19 L5 19 L3 21 L1 20 Z" fill="#f4cf66"/><path d="M1 2 L5 1 L5 19 L3 21 L1 20 Z" fill="#fbe3a0"/><rect x="5" y="3" width="9" height="16" fill="#f6d372"/><rect x="11" y="12" width="3" height="7" fill="#f1c457"/></svg>
<div class="t" style="left:127.67px;top:472.09px;font-size:17.5px;color:#2b2b2b;transform:scaleX(0.9650);transform-origin:0 0;">373.0 MB</div>
<div class="t" style="left:214.70px;top:472.09px;font-size:17.5px;color:#2b2b2b;">Product Anniversary</div>
<div class="a" style="left:92px;top:495.18px;width:29.7px;height:27.5px;background:#e6e6fa"></div>
<svg style="left:42px;top:502.18px" width="10" height="16" viewBox="0 0 10 16"><path d="M2 2 L8 8 L2 14" fill="none" stroke="#8c8c8c" stroke-width="1.8"/></svg>
<svg style="left:67px;top:499.18px" width="16" height="22" viewBox="0 0 16 22"><path d="M1 2 L5 1 L5 3 L14 3 L14 19 L5 19 L3 21 L1 20 Z" fill="#f4cf66"/><path d="M1 2 L5 1 L5 19 L3 21 L1 20 Z" fill="#fbe3a0"/><rect x="5" y="3" width="9" height="16" fill="#f6d372"/><rect x="11" y="12" width="3" height="7" fill="#f1c457"/></svg>
<div class="t" style="left:127.67px;top:502.27px;font-size:17.5px;color:#2b2b2b;transform:scaleX(0.9650);transform-origin:0 0;">339.1 MB</div>
<div class="t" style="left:214.70px;top:502.27px;font-size:17.5px;color:#2b2b2b;transform:scaleX(0.9957);transform-origin:0 0;">Filter Virus</div>
<div class="a" style="left:92px;top:525.36px;width:25px;height:27.5px;background:#e6e6fa"></div>
<svg style="left:42px;top:532.36px" width="10" height="16" viewBox="0 0 10 16"><path d="M2 2 L8 8 L2 14" fill="none" stroke="#8c8c8c" stroke-width="1.8"/></svg>
<svg style="left:67px;top:529.36px" width="16" height="22" viewBox="0 0 16 22"><path d="M1 2 L5 1 L5 3 L14 3 L14 19 L5 19 L3 21 L1 20 Z" fill="#f4cf66"/><path d="M1 2 L5 1 L5 19 L3 21 L1 20 Z" fill="#fbe3a0"/><rect x="5" y="3" width="9" height="16" fill="#f6d372"/><rect x="11" y="12" width="3" height="7" fill="#f1c457"/></svg>
<div class="t" style="left:127.67px;top:532.45px;font-size:17.5px;color:#2b2b2b;transform:scaleX(0.9650);transform-origin:0 0;">287.3 MB</div>
<div class="t" style="left:214.69px;top:532.45px;font-size:17.5px;color:#2b2b2b;transform:scaleX(1.0121);transform-origin:0 0;">Exchange Server Toolbox Word</div>
<div class="a" style="left:92px;top:555.54px;width:17.8px;height:27.5px;background:#e6e6fa"></div>
<svg style="left:42px;top:562.54px" width="10" height="16" viewBox="0 0 10 16"><path d="M2 2 L8 8 L2 14" fill="none" stroke="#8c8c8c" stroke-width="1.8"/></svg>
<svg style="left:67px;top:559.54px" width="16" height="22" viewBox="0 0 16 22"><path d="M1 2 L5 1 L5 3 L14 3 L14 19 L5 19 L3 21 L1 20 Z" fill="#f4cf66"/><path d="M1 2 L5 1 L5 19 L3 21 L1 20 Z" fill="#fbe3a0"/><rect x="5" y="3" width="9" height="16" fill="#f6d372"/><rect x="11" y="12" width="3" height="7" fill="#f1c457"/></svg>
<div class="t" style="left:127.67px;top:562.63px;font-size:17.5px;color:#2b2b2b;transform:scaleX(0.9650);transform-origin:0 0;">209.8 MB</div>
<div class="t" style="left:215.70px;top:562.63px;font-size:17.5px;color:#2b2b2b;transform:scaleX(0.9492);transform-origin:0 0;">Check Lousia</div>
<div class="a" style="left:92px;top:585.72px;width:16.4px;height:27.5px;background:#e6e6fa"></div>
<svg style="left:42px;top:592.72px" width="10" height="16" viewBox="0 0 10 16"><path d="M2 2 L8 8 L2 14" fill="none" stroke="#8c8c8c" stroke-width="1.8"/></svg>
<svg style="left:67px;top:589.72px" width="16" height="22" viewBox="0 0 16 22"><path d="M1 2 L5 1 L5 3 L14 3 L14 19 L5 19 L3 21 L1 20 Z" fill="#f4cf66"/><path d="M1 2 L5 1 L5 19 L3 21 L1 20 Z" fill="#fbe3a0"/><rect x="5" y="3" width="9" height="16" fill="#f6d372"/><rect x="11" y="12" width="3" height="7" fill="#f1c457"/></svg>
<div class="t" style="left:127.67px;top:592.81px;font-size:17.5px;color:#2b2b2b;transform:scaleX(0.9650);transform-origin:0 0;">190.7 MB</div>
<div class="t" style="left:214.70px;top:592.81px;font-size:17.5px;color:#2b2b2b;transform:scaleX(1.0034);transform-origin:0 0;">Marcus Uhrzeit</div>
<div class="a" style="left:92px;top:615.9px;width:15.7px;height:27.5px;background:#e6e6fa"></div>
<svg style="left:42px;top:622.9px" width="10" height="16" viewBox="0 0 10 16"><path d="M2 2 L8 8 L2 14" fill="none" stroke="#8c8c8c" stroke-width="1.8"/></svg>
<svg style="left:67px;top:619.9px" width="16" height="22" viewBox="0 0 16 22"><path d="M1 2 L5 1 L5 3 L14 3 L14 19 L5 19 L3 21 L1 20 Z" fill="#f4cf66"/><path d="M1 2 L5 1 L5 19 L3 21 L1 20 Z" fill="#fbe3a0"/><rect x="5" y="3" width="9" height="16" fill="#f6d372"/><rect x="11" y="12" width="3" height="7" fill="#f1c457"/></svg>
<div class="t" style="left:127.67px;top:622.99px;font-size:17.5px;color:#2b2b2b;transform:scaleX(0.9650);transform-origin:0 0;">183.8 MB</div>
<div class="t" style="left:214.66px;top:622.99px;font-size:17.5px;color:#2b2b2b;transform:scaleX(1.0362);transform-origin:0 0;">Martin Cleaning</div>
<div class="a" style="left:92px;top:646.08px;width:15px;height:27.5px;background:#e6e6fa"></div>
<svg style="left:67px;top:650.08px" width="16" height="22" viewBox="0 0 16 22"><path d="M1 2 L5 1 L5 3 L14 3 L14 19 L5 19 L3 21 L1 20 Z" fill="#f4cf66"/><path d="M1 2 L5 1 L5 19 L3 21 L1 20 Z" fill="#fbe3a0"/><rect x="5" y="3" width="9" height="16" fill="#f6d372"/><rect x="11" y="12" width="3" height="7" fill="#f1c457"/></svg>
<div class="t" style="left:127.67px;top:653.17px;font-size:17.5px;color:#2b2b2b;transform:scaleX(0.9650);transform-origin:0 0;">183.6 MB</div>
<div class="t" style="left:214.70px;top:653.17px;font-size:17.5px;color:#2b2b2b;transform:scaleX(0.9961);transform-origin:0 0;">Photoshop SpaceObServer</div>
<div class="a" style="left:92px;top:676.26px;width:15px;height:27.5px;background:#e6e6fa"></div>
<svg style="left:67px;top:680.26px" width="16" height="22" viewBox="0 0 16 22"><path d="M1 2 L5 1 L5 3 L14 3 L14 19 L5 19 L3 21 L1 20 Z" fill="#f4cf66"/><path d="M1 2 L5 1 L5 19 L3 21 L1 20 Z" fill="#fbe3a0"/><rect x="5" y="3" width="9" height="16" fill="#f6d372"/><rect x="11" y="12" width="3" height="7" fill="#f1c457"/></svg>
<div class="t" style="left:127.67px;top:683.35px;font-size:17.5px;color:#2b2b2b;transform:scaleX(0.9650);transform-origin:0 0;">182.4 MB</div>
<div class="t" style="left:215.70px;top:683.35px;font-size:17.5px;color:#2b2b2b;transform:scaleX(1.0402);transform-origin:0 0;">Administrator August</div>
<div class="a" style="left:92px;top:706.44px;width:13.3px;height:27.5px;background:#e6e6fa"></div>
<svg style="left:42px;top:713.44px" width="10" height="16" viewBox="0 0 10 16"><path d="M2 2 L8 8 L2 14" fill="none" stroke="#8c8c8c" stroke-width="1.8"/></svg>
<svg style="left:67px;top:710.44px" width="16" height="22" viewBox="0 0 16 22"><path d="M1 2 L5 1 L5 3 L14 3 L14 19 L5 19 L3 21 L1 20 Z" fill="#f4cf66"/><path d="M1 2 L5 1 L5 19 L3 21 L1 20 Z" fill="#fbe3a0"/><rect x="5" y="3" width="9" height="16" fill="#f6d372"/><rect x="11" y="12" width="3" height="7" fill="#f1c457"/></svg>
<div class="t" style="left:127.67px;top:713.53px;font-size:17.5px;color:#2b2b2b;transform:scaleX(0.9650);transform-origin:0 0;">163.9 MB</div>
<div class="t" style="left:215.70px;top:713.53px;font-size:17.5px;color:#2b2b2b;transform:scaleX(0.8721);transform-origin:0 0;">$RECYCLE.BIN</div>
<div class="a" style="left:92px;top:736.62px;width:8.8px;height:27.5px;background:#e6e6fa"></div>
<svg style="left:66px;top:740.62px" width="18" height="22" viewBox="0 0 18 22"><path d="M1.5 1.5 H12 L16.5 6 V20.5 H1.5 Z" fill="#fff" stroke="#8a8a8a" stroke-width="1"/><path d="M12 1.5 V6 H16.5" fill="none" stroke="#8a8a8a" stroke-width="1"/></svg>
<div class="t" style="left:127.67px;top:743.71px;font-size:17.5px;color:#2b2b2b;transform:scaleX(0.9650);transform-origin:0 0;">106.0 MB</div>
<div class="t" style="left:214.68px;top:743.71px;font-size:17.5px;color:#2b2b2b;transform:scaleX(1.0154);transform-origin:0 0;">[Files]</div>
<div class="a" style="left:92px;top:766.8px;width:5.4px;height:27.5px;background:#e6e6fa"></div>
<svg style="left:42px;top:773.8px" width="10" height="16" viewBox="0 0 10 16"><path d="M2 2 L8 8 L2 14" fill="none" stroke="#8c8c8c" stroke-width="1.8"/></svg>
<svg style="left:67px;top:770.8px" width="16" height="22" viewBox="0 0 16 22"><path d="M1 2 L5 1 L5 3 L14 3 L14 19 L5 19 L3 21 L1 20 Z" fill="#f4cf66"/><path d="M1 2 L5 1 L5 19 L3 21 L1 20 Z" fill="#fbe3a0"/><rect x="5" y="3" width="9" height="16" fill="#f6d372"/><rect x="11" y="12" width="3" height="7" fill="#f1c457"/></svg>
<div class="t" style="left:137.06px;top:773.89px;font-size:17.5px;color:#2b2b2b;transform:scaleX(0.9650);transform-origin:0 0;">71.1 MB</div>
<div class="t" style="left:214.66px;top:773.89px;font-size:17.5px;color:#2b2b2b;transform:scaleX(1.0412);transform-origin:0 0;">Datei Nutzer</div>
<div class="a" style="left:92px;top:796.98px;width:1.2px;height:27.5px;background:#e6e6fa"></div>
<svg style="left:67px;top:800.98px" width="16" height="22" viewBox="0 0 16 22"><path d="M1 2 L5 1 L5 3 L14 3 L14 19 L5 19 L3 21 L1 20 Z" fill="#f4cf66"/><path d="M1 2 L5 1 L5 19 L3 21 L1 20 Z" fill="#fbe3a0"/><rect x="5" y="3" width="9" height="16" fill="#f6d372"/><rect x="11" y="12" width="3" height="7" fill="#f1c457"/></svg>
<div class="t" style="left:146.45px;top:804.07px;font-size:17.5px;color:#2b2b2b;transform:scaleX(0.9650);transform-origin:0 0;">7.3 MB</div>
<div class="t" style="left:214.68px;top:804.07px;font-size:17.5px;color:#2b2b2b;transform:scaleX(1.0250);transform-origin:0 0;">Date Cleaning</div>
<svg style="left:67px;top:831.16px" width="16" height="22" viewBox="0 0 16 22"><path d="M1 2 L5 1 L5 3 L14 3 L14 19 L5 19 L3 21 L1 20 Z" fill="#f4cf66"/><path d="M1 2 L5 1 L5 19 L3 21 L1 20 Z" fill="#fbe3a0"/><rect x="5" y="3" width="9" height="16" fill="#f6d372"/><rect x="11" y="12" width="3" height="7" fill="#f1c457"/></svg>
<div class="t" style="left:146.45px;top:834.25px;font-size:17.5px;color:#2b2b2b;transform:scaleX(0.9650);transform-origin:0 0;">6.0 MB</div>
<div class="t" style="left:214.64px;top:834.25px;font-size:17.5px;color:#2b2b2b;transform:scaleX(1.0644);transform-origin:0 0;">Illustrator Month</div>
<svg style="left:67px;top:861.34px" width="16" height="22" viewBox="0 0 16 22"><path d="M1 2 L5 1 L5 3 L14 3 L14 19 L5 19 L3 21 L1 20 Z" fill="#f4cf66"/><path d="M1 2 L5 1 L5 19 L3 21 L1 20 Z" fill="#fbe3a0"/><rect x="5" y="3" width="9" height="16" fill="#f6d372"/><rect x="11" y="12" width="3" height="7" fill="#f1c457"/></svg>
<div class="t" style="left:146.45px;top:864.43px;font-size:17.5px;color:#2b2b2b;transform:scaleX(0.9650);transform-origin:0 0;">5.8 MB</div>
<div class="t" style="left:214.72px;top:864.43px;font-size:17.5px;color:#2b2b2b;transform:scaleX(0.9820);transform-origin:0 0;">Filter Laura</div>
<svg style="left:67px;top:891.52px" width="16" height="22" viewBox="0 0 16 22"><path d="M1 2 L5 1 L5 3 L14 3 L14 19 L5 19 L3 21 L1 20 Z" fill="#f4cf66"/><path d="M1 2 L5 1 L5 19 L3 21 L1 20 Z" fill="#fbe3a0"/><rect x="5" y="3" width="9" height="16" fill="#f6d372"/><rect x="11" y="12" width="3" height="7" fill="#f1c457"/></svg>
<div class="t" style="left:146.45px;top:894.61px;font-size:17.5px;color:#2b2b2b;transform:scaleX(0.9650);transform-origin:0 0;">4.9 MB</div>
<div class="t" style="left:214.66px;top:894.61px;font-size:17.5px;color:#2b2b2b;transform:scaleX(1.0391);transform-origin:0 0;">Helmut Employer</div>
<svg style="left:42px;top:924.7px" width="10" height="16" viewBox="0 0 10 16"><path d="M2 2 L8 8 L2 14" fill="none" stroke="#8c8c8c" stroke-width="1.8"/></svg>
<svg style="left:67px;top:921.7px" width="16" height="22" viewBox="0 0 16 22"><path d="M1 2 L5 1 L5 3 L14 3 L14 19 L5 19 L3 21 L1 20 Z" fill="#f4cf66"/><path d="M1 2 L5 1 L5 19 L3 21 L1 20 Z" fill="#fbe3a0"/><rect x="5" y="3" width="9" height="16" fill="#f6d372"/><rect x="11" y="12" width="3" height="7" fill="#f1c457"/></svg>
<div class="t" style="left:142.74px;top:924.79px;font-size:17.5px;color:#2b2b2b;transform:scaleX(0.9650);transform-origin:0 0;">0 Bytes</div>
<div class="t" style="left:214.64px;top:924.79px;font-size:17.5px;color:#2b2b2b;transform:scaleX(1.0553);transform-origin:0 0;">Bodo Telefonat</div>
<svg style="left:67px;top:951.88px" width="16" height="22" viewBox="0 0 16 22"><path d="M1 2 L5 1 L5 3 L14 3 L14 19 L5 19 L3 21 L1 20 Z" fill="#f4cf66"/><path d="M1 2 L5 1 L5 19 L3 21 L1 20 Z" fill="#fbe3a0"/><rect x="5" y="3" width="9" height="16" fill="#f6d372"/><rect x="11" y="12" width="3" height="7" fill="#f1c457"/></svg>
<div class="t" style="left:142.74px;top:954.97px;font-size:17.5px;color:#2b2b2b;transform:scaleX(0.9650);transform-origin:0 0;">0 Bytes</div>
<div class="t" style="left:215.70px;top:954.97px;font-size:17.5px;color:#2b2b2b;transform:scaleX(1.0288);transform-origin:0 0;">System Volume Information</div>
<div class="a" style="left:0px;top:1036px;width:705px;height:1.5px;background:#cfcfcf"></div>
<div class="a" style="left:106.5px;top:1041px;width:1px;height:30px;background:#ececec"></div>
<div class="a" style="left:106.5px;top:1071px;width:1px;height:30px;border-left:1px dotted #e6e6e6"></div>
<div class="a" style="left:243.2px;top:1041px;width:1px;height:30px;background:#ececec"></div>
<div class="a" style="left:243.2px;top:1071px;width:1px;height:30px;border-left:1px dotted #e6e6e6"></div>
<div class="a" style="left:379.5px;top:1041px;width:1px;height:30px;background:#ececec"></div>
<div class="a" style="left:379.5px;top:1071px;width:1px;height:30px;border-left:1px dotted #e6e6e6"></div>
<div class="a" style="left:500.6px;top:1041px;width:1px;height:30px;background:#ececec"></div>
<div class="a" style="left:500.6px;top:1071px;width:1px;height:30px;border-left:1px dotted #e6e6e6"></div>
<div class="a" style="left:645px;top:1041px;width:1px;height:30px;background:#ececec"></div>
<div class="a" style="left:645px;top:1071px;width:1px;height:30px;border-left:1px dotted #e6e6e6"></div>
<div class="t" style="left:6.50px;top:1049.19px;font-size:17.5px;color:#333;transform:scaleX(0.9950);transform-origin:0 0;">Name</div>
<div class="t" style="left:165.00px;top:1049.19px;font-size:17.5px;color:#333;transform:scaleX(0.9950);transform-origin:0 0;">Allocated</div>
<div class="t" style="left:282.72px;top:1049.19px;font-size:17.5px;color:#333;transform:scaleX(0.9950);transform-origin:0 0;">Free Space</div>
<div class="t" style="left:456.19px;top:1049.19px;font-size:17.5px;color:#333;transform:scaleX(0.9950);transform-origin:0 0;">Files</div>
<div class="t" style="left:513.00px;top:1049.19px;font-size:17.5px;color:#333;transform:scaleX(0.9939);transform-origin:0 0;">% Size Growth</div>
<svg style="left:11px;top:1085.5px" width="21.6" height="11.25" viewBox="0 0 24 12.5"><path d="M0.3 4.2 L15.3 0.3 L23.7 2.6 V7.3 L10.2 12 L0.3 9.4 Z" fill="#c4c4c4" stroke="#c4c4c4" stroke-width="0.6" stroke-linejoin="round"/><path d="M0.3 4.2 L15.3 0.3 L23.7 2.6 L10.2 6.8 Z" fill="#e9e9e9"/><path d="M0.3 4.2 L10.2 6.8 V12 L0.3 9.4 Z" fill="#3a3a3a"/><path d="M10.2 6.8 L23.7 2.6 V7.3 L10.2 12 Z" fill="#b5b5b5"/><circle cx="8.3" cy="9.3" r="0.7" fill="#3c3"/></svg>
<div class="t" style="left:42.94px;top:1078.69px;font-size:17.5px;color:#222;transform:scaleX(0.9594);transform-origin:0 0;">E:\</div>
<div class="t" style="left:183.98px;top:1078.69px;font-size:17.5px;color:#222;transform:scaleX(0.9650);transform-origin:0 0;">6.4 GB</div>
<div class="t" style="left:301.62px;top:1078.69px;font-size:17.5px;color:#222;transform:scaleX(0.9650);transform-origin:0 0;">119.2 MB</div>
<div class="t" style="left:464.77px;top:1078.69px;font-size:17.5px;color:#222;transform:scaleX(0.9650);transform-origin:0 0;">604</div>
<div class="a" style="left:502.2px;top:1072.4px;width:140.7px;height:26.4px;background:#d6d6d6;border:1px solid #bdbdbd"></div>
<div class="a" style="left:503.2px;top:1073.4px;width:31.6px;height:24.4px;background:#abaaf5"></div>
<div class="t" style="left:546.60px;top:1078.69px;font-size:17.5px;color:#c0392b;transform:scaleX(0.9775);transform-origin:0 0;">+22.8 %</div>
<div class="a" style="left:0px;top:1100px;width:645px;height:1px;border-top:1px dotted #e3e3e3"></div>
<div class="a" style="left:712.5px;top:278.5px;width:1602px;height:928px;border:1px solid #d9d9d9;background:#fff"></div>
<div class="a" style="left:715px;top:248px;width:95.5px;height:31px;background:#f0f0f0;border:1px solid #d9d9d9"></div>
<div class="a" style="left:809.5px;top:248px;width:102.10000000000002px;height:31px;background:#f0f0f0;border:1px solid #d9d9d9"></div>
<div class="a" style="left:910.6px;top:245px;width:105.19999999999993px;height:35px;background:#fff;border:1px solid #d9d9d9;border-bottom:none"></div>
<div class="a" style="left:1015.8px;top:248px;width:127.60000000000014px;height:31px;background:#f0f0f0;border:1px solid #d9d9d9"></div>
<div class="a" style="left:1142.4px;top:248px;width:89.39999999999986px;height:31px;background:#f0f0f0;border:1px solid #d9d9d9"></div>
<div class="a" style="left:1230.8px;top:248px;width:117.0px;height:31px;background:#f0f0f0;border:1px solid #d9d9d9"></div>
<div class="a" style="left:1346.8px;top:248px;width:163.70000000000005px;height:31px;background:#f0f0f0;border:1px solid #d9d9d9"></div>
<div class="a" style="left:1509.5px;top:248px;width:148.9000000000001px;height:31px;background:#f0f0f0;border:1px solid #d9d9d9"></div>
<div class="a" style="left:1657.4px;top:248px;width:162.29999999999995px;height:31px;background:#f0f0f0;border:1px solid #d9d9d9"></div>
<div class="t" style="left:753.40px;top:257.30px;font-size:17.6px;color:#222;transform:scaleX(0.9400);transform-origin:0 0;">Charts</div>
<div class="t" style="left:848.17px;top:257.30px;font-size:17.6px;color:#222;transform:scaleX(1.0344);transform-origin:0 0;">History</div>
<div class="t" style="left:951.27px;top:254.10px;font-size:17.6px;color:#222;transform:scaleX(1.0306);transform-origin:0 0;">Details</div>
<div class="t" style="left:1052.84px;top:257.30px;font-size:17.6px;color:#222;transform:scaleX(0.9605);transform-origin:0 0;">Extensions</div>
<div class="t" style="left:1181.69px;top:257.30px;font-size:17.6px;color:#222;transform:scaleX(0.9082);transform-origin:0 0;">Users</div>
<div class="t" style="left:1270.50px;top:257.30px;font-size:17.6px;color:#222;transform:scaleX(0.9801);transform-origin:0 0;">Top Files</div>
<div class="t" style="left:1385.28px;top:257.30px;font-size:17.6px;color:#222;transform:scaleX(1.0176);transform-origin:0 0;">Duplicate Files</div>
<div class="t" style="left:1548.46px;top:257.30px;font-size:17.6px;color:#222;transform:scaleX(1.0416);transform-origin:0 0;">Distributions</div>
<div class="t" style="left:1696.30px;top:257.30px;font-size:17.6px;color:#222;transform:scaleX(1.0033);transform-origin:0 0;">Similar Folders</div>
<svg style="left:721px;top:250.5px" width="26" height="26" viewBox="0 0 26 26"><circle cx="13" cy="13" r="12.3" fill="#1f6fa8"/><path d="M13 13 L13 0.7 A12.3 12.3 0 0 0 1.2 9.5 Z" fill="#f0c44c"/><path d="M13 13 L1.2 9.5 A12.3 12.3 0 0 0 5.5 22.8 Z" fill="#c2461f"/><path d="M13 0.7 V13 L5.5 22.8" fill="none" stroke="#666" stroke-width="0.8"/></svg>
<svg style="left:818px;top:256px" width="24" height="17" viewBox="0 0 24 17"><path d="M0 16.5 L5 5 L9 10 L14 1 L19 8 L23 6 V16.5 Z" fill="#2a6db5"/><path d="M5 5 L9 10 L7 16.5 H0 Z" fill="#c2461f"/><path d="M19 8 L23 6 V16.5 H19 Z" fill="#f0c44c"/></svg>
<div class="a" style="left:920px;top:249px;width:24px;height:25px;background:#f7f7f7;border-radius:3px"></div>
<svg style="left:922px;top:251px" width="22" height="20" viewBox="0 0 22 20"><path d="M1 2.2 H7.8 M12 2.2 H18.8 M1 7.4 H7.8 M12 7.4 H18.8 M1 12.6 H7.8 M12 12.6 H18.8 M1 17.7 H7.8 M12 17.7 H18.8" stroke="#555" stroke-width="1.7" stroke-linecap="round"/></svg>
<svg style="left:1021px;top:253px" width="24" height="23" viewBox="0 0 24 23"><rect x="10" y="1" width="13" height="11" fill="#2a6db5"/><path d="M14 12 L10 14" stroke="#2a6db5" stroke-width="2"/><circle cx="8" cy="15" r="7.3" fill="#d86a4e"/><path d="M6.5 11.5 V18.5" stroke="#fff" stroke-width="1.5"/></svg>
<svg style="left:1151px;top:253px" width="24" height="22" viewBox="0 0 24 22"><circle cx="12" cy="3" r="2.3" fill="#2f8be0"/><circle cx="7" cy="10" r="3.8" fill="#2f8be0"/><circle cx="17" cy="10" r="3.8" fill="#2f8be0"/><path d="M0.5 18 Q7 13.5 12 17 Q17 13.5 23.5 18 V21.5 H0.5 Z" fill="#2f8be0"/></svg>
<svg style="left:1240px;top:252px" width="20" height="24" viewBox="0 0 20 24"><path d="M1.5 1.5 H13 L18.5 7 V22.5 H1.5 Z" fill="#fff" stroke="#999"/><path d="M10 20 V8 M5.5 12.5 L10 8 L14.5 12.5" fill="none" stroke="#d24625" stroke-width="1.8"/></svg>
<svg style="left:1356px;top:252px" width="21" height="22" viewBox="0 0 21 22"><path d="M1.5 1.5 H9 L12.5 5 V15.5 H1.5 Z" fill="#fafafa" stroke="#c4c4c4"/><path d="M6.5 6.5 H14 L19.5 12 V21.5 H6.5 Z" fill="#f2f5fa" stroke="#c4c4c4"/><path d="M9 14 H17 M9 16.5 H17 M9 19 H17" stroke="#9bb3d6"/></svg>
<svg style="left:1521px;top:253px" width="18" height="21" viewBox="0 0 18 21"><rect x="0.5" y="9" width="5" height="12" fill="#2a6db5"/><rect x="6.5" y="1" width="5" height="20" fill="#f0c44c"/><rect x="12.5" y="7" width="5" height="14" fill="#c2461f"/></svg>
<svg style="left:1664px;top:252px" width="26" height="23" viewBox="0 0 26 23"><path d="M1 1 H10 L12 3 H25 V22 H1 Z" fill="#f2c542"/><rect x="1" y="5" width="24" height="17" fill="#f8d15a"/><rect x="4" y="15" width="18" height="7" rx="1" fill="#2a6db5"/></svg>
<div class="a" style="left:943.7px;top:283px;width:1px;height:31px;background:#e5e5e5"></div>
<div class="a" style="left:1071.5px;top:283px;width:1px;height:31px;background:#e5e5e5"></div>
<div class="a" style="left:1498.7px;top:283px;width:1px;height:31px;background:#e5e5e5"></div>
<div class="a" style="left:1582px;top:283px;width:1px;height:31px;background:#e5e5e5"></div>
<div class="a" style="left:1727px;top:283px;width:1px;height:31px;background:#e5e5e5"></div>
<div class="a" style="left:1871.8px;top:283px;width:1px;height:31px;background:#e5e5e5"></div>
<div class="a" style="left:1199.2px;top:282.7px;width:216.3px;height:31.5px;background:#d9ebf9"></div>
<div class="t" style="left:723.94px;top:291.70px;font-size:17.6px;color:#333;transform:scaleX(1.0566);transform-origin:0 0;">Name</div>
<div class="t" style="left:1032.30px;top:291.70px;font-size:17.6px;color:#333;transform:scaleX(0.9539);transform-origin:0 0;">Size</div>
<div class="t" style="left:1116.00px;top:291.70px;font-size:17.6px;color:#333;transform:scaleX(1.0588);transform-origin:0 0;">Allocated</div>
<div class="t" style="left:1214.60px;top:291.70px;font-size:17.6px;color:#333;">% of Parent (Allocat...</div>
<svg style="left:1394px;top:296.5px" width="12" height="6.5" viewBox="0 0 12 6.5"><path d="M1 1 L6.0 5.5 L11 1" fill="none" stroke="#6a6a6a" stroke-width="1.3"/></svg>
<div class="t" style="left:1456.35px;top:291.70px;font-size:17.6px;color:#333;transform:scaleX(0.9519);transform-origin:0 0;">Files</div>
<div class="t" style="left:1516.80px;top:291.70px;font-size:17.6px;color:#333;transform:scaleX(0.9971);transform-origin:0 0;">Folders</div>
<div class="t" style="left:1589.65px;top:291.70px;font-size:17.6px;color:#333;transform:scaleX(1.0519);transform-origin:0 0;">Last Modified</div>
<div class="t" style="left:1734.44px;top:291.70px;font-size:17.6px;color:#333;transform:scaleX(0.9642);transform-origin:0 0;">Last Accessed</div>
<div class="t" style="left:1880.00px;top:291.70px;font-size:17.6px;color:#333;transform:scaleX(0.9931);transform-origin:0 0;">Owner</div>
<div class="a" style="left:713px;top:314px;width:1206px;height:866.5px;overflow:hidden">
<svg style="left:17px;top:5.3px" width="16" height="22" viewBox="0 0 16 22"><path d="M1 2 L5 1 L5 3 L14 3 L14 19 L5 19 L3 21 L1 20 Z" fill="#f4cf66"/><path d="M1 2 L5 1 L5 19 L3 21 L1 20 Z" fill="#fbe3a0"/><rect x="5" y="3" width="9" height="16" fill="#f6d372"/><rect x="11" y="12" width="3" height="7" fill="#f1c457"/></svg>
<div class="t" style="left:47.54px;top:8.19px;font-size:17.5px;color:#000;font-weight:bold;transform:scaleX(0.9551);transform-origin:0 0;">Reihe Lisa</div>
<div class="t" style="left:298.29px;top:8.19px;font-size:17.5px;color:#000;font-weight:bold;transform:scaleX(0.9800);transform-origin:0 0;">1.8 GB</div>
<div class="t" style="left:426.79px;top:8.19px;font-size:17.5px;color:#000;font-weight:bold;transform:scaleX(0.9800);transform-origin:0 0;">1.8 GB</div>
<div class="a" style="left:488.4000000000001px;top:1.3px;width:213.5px;height:27px;background:#d6d6d6;border:1px solid #b9b9b9"></div>
<div class="a" style="left:489.4000000000001px;top:2.3px;width:55.2px;height:25px;background:#abaaf5"></div>
<div class="t" style="left:570.62px;top:8.19px;font-size:17.5px;color:#000;font-weight:bold;transform:scaleX(1.0370);transform-origin:0 0;">26.1 %</div>
<div class="t" style="left:759.28px;top:8.19px;font-size:17.5px;color:#000;font-weight:bold;transform:scaleX(1.0500);transform-origin:0 0;">64</div>
<div class="t" style="left:842.48px;top:8.19px;font-size:17.5px;color:#000;font-weight:bold;transform:scaleX(1.0500);transform-origin:0 0;">16</div>
<div class="t" style="left:886.20px;top:8.19px;font-size:17.5px;color:#000;font-weight:bold;transform:scaleX(1.1700);transform-origin:0 0;">3/13/2022</div>
<div class="t" style="left:1030.70px;top:8.19px;font-size:17.5px;color:#000;font-weight:bold;transform:scaleX(1.1700);transform-origin:0 0;">3/13/2022</div>
<div class="t" style="left:1175.30px;top:8.19px;font-size:17.5px;color:#000;font-weight:bold;transform:scaleX(0.9300);transform-origin:0 0;">schr</div>
<svg style="left:17px;top:35.480000000000004px" width="16" height="22" viewBox="0 0 16 22"><path d="M1 2 L5 1 L5 3 L14 3 L14 19 L5 19 L3 21 L1 20 Z" fill="#f4cf66"/><path d="M1 2 L5 1 L5 19 L3 21 L1 20 Z" fill="#fbe3a0"/><rect x="5" y="3" width="9" height="16" fill="#f6d372"/><rect x="11" y="12" width="3" height="7" fill="#f1c457"/></svg>
<div class="t" style="left:47.59px;top:38.37px;font-size:17.5px;color:#2b2b2b;transform:scaleX(1.0058);transform-origin:0 0;">Heinrich Reihe</div>
<div class="t" style="left:280.51px;top:38.37px;font-size:17.5px;color:#2b2b2b;transform:scaleX(0.9630);transform-origin:0 0;">898.6 MB</div>
<div class="t" style="left:409.01px;top:38.37px;font-size:17.5px;color:#2b2b2b;transform:scaleX(0.9630);transform-origin:0 0;">898.6 MB</div>
<div class="a" style="left:488.4000000000001px;top:31.48px;width:213.5px;height:27px;background:#d6d6d6;border:1px solid #b9b9b9"></div>
<div class="a" style="left:489.4000000000001px;top:32.48px;width:27.5px;height:25px;background:#abaaf5"></div>
<div class="t" style="left:574.62px;top:38.37px;font-size:17.5px;color:#2b2b2b;transform:scaleX(0.9350);transform-origin:0 0;">13.0 %</div>
<div class="t" style="left:762.02px;top:38.37px;font-size:17.5px;color:#2b2b2b;transform:scaleX(0.9600);transform-origin:0 0;">29</div>
<div class="t" style="left:853.60px;top:38.37px;font-size:17.5px;color:#2b2b2b;transform:scaleX(0.9600);transform-origin:0 0;">4</div>
<div class="t" style="left:886.20px;top:38.37px;font-size:17.5px;color:#2b2b2b;transform:scaleX(1.0400);transform-origin:0 0;">5/5/2021</div>
<div class="t" style="left:1030.70px;top:38.37px;font-size:17.5px;color:#2b2b2b;transform:scaleX(1.0400);transform-origin:0 0;">3/13/2022</div>
<div class="t" style="left:1175.30px;top:38.37px;font-size:17.5px;color:#2b2b2b;">schr</div>
<svg style="left:17px;top:65.66px" width="16" height="22" viewBox="0 0 16 22"><path d="M1 2 L5 1 L5 3 L14 3 L14 19 L5 19 L3 21 L1 20 Z" fill="#f4cf66"/><path d="M1 2 L5 1 L5 19 L3 21 L1 20 Z" fill="#fbe3a0"/><rect x="5" y="3" width="9" height="16" fill="#f6d372"/><rect x="11" y="12" width="3" height="7" fill="#f1c457"/></svg>
<div class="t" style="left:48.60px;top:68.55px;font-size:17.5px;color:#2b2b2b;transform:scaleX(0.9822);transform-origin:0 0;">Verzeichnis Sebastian</div>
<div class="t" style="left:280.51px;top:68.55px;font-size:17.5px;color:#2b2b2b;transform:scaleX(0.9630);transform-origin:0 0;">705.7 MB</div>
<div class="t" style="left:409.01px;top:68.55px;font-size:17.5px;color:#2b2b2b;transform:scaleX(0.9630);transform-origin:0 0;">705.9 MB</div>
<div class="a" style="left:488.4000000000001px;top:61.66px;width:213.5px;height:27px;background:#d6d6d6;border:1px solid #b9b9b9"></div>
<div class="a" style="left:489.4000000000001px;top:62.66px;width:21.57px;height:25px;background:#abaaf5"></div>
<div class="t" style="left:574.62px;top:68.55px;font-size:17.5px;color:#2b2b2b;transform:scaleX(0.9350);transform-origin:0 0;">10.2 %</div>
<div class="t" style="left:762.02px;top:68.55px;font-size:17.5px;color:#2b2b2b;transform:scaleX(0.9600);transform-origin:0 0;">57</div>
<div class="t" style="left:854.56px;top:68.55px;font-size:17.5px;color:#2b2b2b;transform:scaleX(0.9600);transform-origin:0 0;">1</div>
<div class="t" style="left:886.20px;top:68.55px;font-size:17.5px;color:#2b2b2b;transform:scaleX(1.0400);transform-origin:0 0;">3/5/2022</div>
<div class="t" style="left:1030.70px;top:68.55px;font-size:17.5px;color:#2b2b2b;transform:scaleX(1.0400);transform-origin:0 0;">3/13/2022</div>
<div class="t" style="left:1175.30px;top:68.55px;font-size:17.5px;color:#2b2b2b;">schr</div>
<svg style="left:17px;top:95.84px" width="16" height="22" viewBox="0 0 16 22"><path d="M1 2 L5 1 L5 3 L14 3 L14 19 L5 19 L3 21 L1 20 Z" fill="#f4cf66"/><path d="M1 2 L5 1 L5 19 L3 21 L1 20 Z" fill="#fbe3a0"/><rect x="5" y="3" width="9" height="16" fill="#f6d372"/><rect x="11" y="12" width="3" height="7" fill="#f1c457"/></svg>
<div class="t" style="left:47.67px;top:98.73px;font-size:17.5px;color:#2b2b2b;transform:scaleX(0.9327);transform-origin:0 0;">Events</div>
<div class="t" style="left:280.51px;top:98.73px;font-size:17.5px;color:#2b2b2b;transform:scaleX(0.9630);transform-origin:0 0;">639.6 MB</div>
<div class="t" style="left:409.01px;top:98.73px;font-size:17.5px;color:#2b2b2b;transform:scaleX(0.9630);transform-origin:0 0;">639.6 MB</div>
<div class="a" style="left:488.4000000000001px;top:91.84px;width:213.5px;height:27px;background:#d6d6d6;border:1px solid #b9b9b9"></div>
<div class="a" style="left:489.4000000000001px;top:92.84px;width:19.46px;height:25px;background:#abaaf5"></div>
<div class="t" style="left:579.64px;top:98.73px;font-size:17.5px;color:#2b2b2b;transform:scaleX(0.9350);transform-origin:0 0;">9.2 %</div>
<div class="t" style="left:762.02px;top:98.73px;font-size:17.5px;color:#2b2b2b;transform:scaleX(0.9600);transform-origin:0 0;">22</div>
<div class="t" style="left:854.56px;top:98.73px;font-size:17.5px;color:#2b2b2b;transform:scaleX(0.9600);transform-origin:0 0;">2</div>
<div class="t" style="left:885.16px;top:98.73px;font-size:17.5px;color:#2b2b2b;transform:scaleX(1.0400);transform-origin:0 0;">11/30/2021</div>
<div class="t" style="left:1030.70px;top:98.73px;font-size:17.5px;color:#2b2b2b;transform:scaleX(1.0400);transform-origin:0 0;">3/13/2022</div>
<div class="t" style="left:1175.30px;top:98.73px;font-size:17.5px;color:#2b2b2b;">schr</div>
<svg style="left:17px;top:126.02px" width="16" height="22" viewBox="0 0 16 22"><path d="M1 2 L5 1 L5 3 L14 3 L14 19 L5 19 L3 21 L1 20 Z" fill="#f4cf66"/><path d="M1 2 L5 1 L5 19 L3 21 L1 20 Z" fill="#fbe3a0"/><rect x="5" y="3" width="9" height="16" fill="#f6d372"/><rect x="11" y="12" width="3" height="7" fill="#f1c457"/></svg>
<div class="t" style="left:47.59px;top:128.91px;font-size:17.5px;color:#2b2b2b;transform:scaleX(1.0119);transform-origin:0 0;">Malte Rechnung</div>
<div class="t" style="left:280.51px;top:128.91px;font-size:17.5px;color:#2b2b2b;transform:scaleX(0.9630);transform-origin:0 0;">554.3 MB</div>
<div class="t" style="left:409.01px;top:128.91px;font-size:17.5px;color:#2b2b2b;transform:scaleX(0.9630);transform-origin:0 0;">554.3 MB</div>
<div class="a" style="left:488.4000000000001px;top:122.02px;width:213.5px;height:27px;background:#d6d6d6;border:1px solid #b9b9b9"></div>
<div class="a" style="left:489.4000000000001px;top:123.02px;width:16.92px;height:25px;background:#abaaf5"></div>
<div class="t" style="left:579.64px;top:128.91px;font-size:17.5px;color:#2b2b2b;transform:scaleX(0.9350);transform-origin:0 0;">8.0 %</div>
<div class="t" style="left:762.02px;top:128.91px;font-size:17.5px;color:#2b2b2b;transform:scaleX(0.9600);transform-origin:0 0;">25</div>
<div class="t" style="left:854.56px;top:128.91px;font-size:17.5px;color:#2b2b2b;transform:scaleX(0.9600);transform-origin:0 0;">8</div>
<div class="t" style="left:886.20px;top:128.91px;font-size:17.5px;color:#2b2b2b;transform:scaleX(1.0400);transform-origin:0 0;">3/5/2022</div>
<div class="t" style="left:1030.70px;top:128.91px;font-size:17.5px;color:#2b2b2b;transform:scaleX(1.0400);transform-origin:0 0;">3/13/2022</div>
<div class="t" style="left:1175.30px;top:128.91px;font-size:17.5px;color:#2b2b2b;">schr</div>
<svg style="left:17px;top:156.2px" width="16" height="22" viewBox="0 0 16 22"><path d="M1 2 L5 1 L5 3 L14 3 L14 19 L5 19 L3 21 L1 20 Z" fill="#f4cf66"/><path d="M1 2 L5 1 L5 19 L3 21 L1 20 Z" fill="#fbe3a0"/><rect x="5" y="3" width="9" height="16" fill="#f6d372"/><rect x="11" y="12" width="3" height="7" fill="#f1c457"/></svg>
<div class="t" style="left:47.60px;top:159.09px;font-size:17.5px;color:#2b2b2b;">Product Anniversary</div>
<div class="t" style="left:280.51px;top:159.09px;font-size:17.5px;color:#2b2b2b;transform:scaleX(0.9630);transform-origin:0 0;">372.9 MB</div>
<div class="t" style="left:409.01px;top:159.09px;font-size:17.5px;color:#2b2b2b;transform:scaleX(0.9630);transform-origin:0 0;">373.0 MB</div>
<div class="a" style="left:488.4000000000001px;top:152.2px;width:213.5px;height:27px;background:#d6d6d6;border:1px solid #b9b9b9"></div>
<div class="a" style="left:489.4000000000001px;top:153.2px;width:11.42px;height:25px;background:#abaaf5"></div>
<div class="t" style="left:579.64px;top:159.09px;font-size:17.5px;color:#2b2b2b;transform:scaleX(0.9350);transform-origin:0 0;">5.4 %</div>
<div class="t" style="left:762.02px;top:159.09px;font-size:17.5px;color:#2b2b2b;transform:scaleX(0.9600);transform-origin:0 0;">36</div>
<div class="t" style="left:854.56px;top:159.09px;font-size:17.5px;color:#2b2b2b;transform:scaleX(0.9600);transform-origin:0 0;">1</div>
<div class="t" style="left:886.20px;top:159.09px;font-size:17.5px;color:#2b2b2b;transform:scaleX(1.0400);transform-origin:0 0;">3/13/2022</div>
<div class="t" style="left:1030.70px;top:159.09px;font-size:17.5px;color:#2b2b2b;transform:scaleX(1.0400);transform-origin:0 0;">3/13/2022</div>
<div class="t" style="left:1175.30px;top:159.09px;font-size:17.5px;color:#2b2b2b;">schr</div>
<svg style="left:17px;top:186.38px" width="16" height="22" viewBox="0 0 16 22"><path d="M1 2 L5 1 L5 3 L14 3 L14 19 L5 19 L3 21 L1 20 Z" fill="#f4cf66"/><path d="M1 2 L5 1 L5 19 L3 21 L1 20 Z" fill="#fbe3a0"/><rect x="5" y="3" width="9" height="16" fill="#f6d372"/><rect x="11" y="12" width="3" height="7" fill="#f1c457"/></svg>
<div class="t" style="left:47.61px;top:189.27px;font-size:17.5px;color:#2b2b2b;transform:scaleX(0.9933);transform-origin:0 0;">Filter Virus</div>
<div class="t" style="left:280.51px;top:189.27px;font-size:17.5px;color:#2b2b2b;transform:scaleX(0.9630);transform-origin:0 0;">339.0 MB</div>
<div class="t" style="left:409.01px;top:189.27px;font-size:17.5px;color:#2b2b2b;transform:scaleX(0.9630);transform-origin:0 0;">339.1 MB</div>
<div class="a" style="left:488.4000000000001px;top:182.38px;width:213.5px;height:27px;background:#d6d6d6;border:1px solid #b9b9b9"></div>
<div class="a" style="left:489.4000000000001px;top:183.38px;width:10.36px;height:25px;background:#abaaf5"></div>
<div class="t" style="left:579.64px;top:189.27px;font-size:17.5px;color:#2b2b2b;transform:scaleX(0.9350);transform-origin:0 0;">4.9 %</div>
<div class="t" style="left:762.02px;top:189.27px;font-size:17.5px;color:#2b2b2b;transform:scaleX(0.9600);transform-origin:0 0;">32</div>
<div class="t" style="left:854.56px;top:189.27px;font-size:17.5px;color:#2b2b2b;transform:scaleX(0.9600);transform-origin:0 0;">5</div>
<div class="t" style="left:885.16px;top:189.27px;font-size:17.5px;color:#2b2b2b;transform:scaleX(1.0400);transform-origin:0 0;">10/11/2021</div>
<div class="t" style="left:1030.70px;top:189.27px;font-size:17.5px;color:#2b2b2b;transform:scaleX(1.0400);transform-origin:0 0;">3/13/2022</div>
<div class="t" style="left:1175.30px;top:189.27px;font-size:17.5px;color:#2b2b2b;">schr</div>
<svg style="left:17px;top:216.56px" width="16" height="22" viewBox="0 0 16 22"><path d="M1 2 L5 1 L5 3 L14 3 L14 19 L5 19 L3 21 L1 20 Z" fill="#f4cf66"/><path d="M1 2 L5 1 L5 19 L3 21 L1 20 Z" fill="#fbe3a0"/><rect x="5" y="3" width="9" height="16" fill="#f6d372"/><rect x="11" y="12" width="3" height="7" fill="#f1c457"/></svg>
<div class="t" style="left:47.63px;top:219.45px;font-size:17.5px;color:#2b2b2b;transform:scaleX(0.9703);transform-origin:0 0;">Exchange Server Too...</div>
<div class="t" style="left:280.51px;top:219.45px;font-size:17.5px;color:#2b2b2b;transform:scaleX(0.9630);transform-origin:0 0;">287.2 MB</div>
<div class="t" style="left:409.01px;top:219.45px;font-size:17.5px;color:#2b2b2b;transform:scaleX(0.9630);transform-origin:0 0;">287.3 MB</div>
<div class="a" style="left:488.4000000000001px;top:212.56px;width:213.5px;height:27px;background:#d6d6d6;border:1px solid #b9b9b9"></div>
<div class="a" style="left:489.4000000000001px;top:213.56px;width:8.88px;height:25px;background:#abaaf5"></div>
<div class="t" style="left:579.64px;top:219.45px;font-size:17.5px;color:#2b2b2b;transform:scaleX(0.9350);transform-origin:0 0;">4.2 %</div>
<div class="t" style="left:761.06px;top:219.45px;font-size:17.5px;color:#2b2b2b;transform:scaleX(0.9600);transform-origin:0 0;">34</div>
<div class="t" style="left:854.56px;top:219.45px;font-size:17.5px;color:#2b2b2b;transform:scaleX(0.9600);transform-origin:0 0;">3</div>
<div class="t" style="left:885.16px;top:219.45px;font-size:17.5px;color:#2b2b2b;transform:scaleX(1.0400);transform-origin:0 0;">10/11/2021</div>
<div class="t" style="left:1030.70px;top:219.45px;font-size:17.5px;color:#2b2b2b;transform:scaleX(1.0400);transform-origin:0 0;">3/13/2022</div>
<div class="t" style="left:1175.30px;top:219.45px;font-size:17.5px;color:#2b2b2b;">schr</div>
<svg style="left:17px;top:246.74px" width="16" height="22" viewBox="0 0 16 22"><path d="M1 2 L5 1 L5 3 L14 3 L14 19 L5 19 L3 21 L1 20 Z" fill="#f4cf66"/><path d="M1 2 L5 1 L5 19 L3 21 L1 20 Z" fill="#fbe3a0"/><rect x="5" y="3" width="9" height="16" fill="#f6d372"/><rect x="11" y="12" width="3" height="7" fill="#f1c457"/></svg>
<div class="t" style="left:48.60px;top:249.63px;font-size:17.5px;color:#2b2b2b;transform:scaleX(0.9501);transform-origin:0 0;">Check Lousia</div>
<div class="t" style="left:280.51px;top:249.63px;font-size:17.5px;color:#2b2b2b;transform:scaleX(0.9630);transform-origin:0 0;">209.8 MB</div>
<div class="t" style="left:409.01px;top:249.63px;font-size:17.5px;color:#2b2b2b;transform:scaleX(0.9630);transform-origin:0 0;">209.8 MB</div>
<div class="a" style="left:488.4000000000001px;top:242.74px;width:213.5px;height:27px;background:#d6d6d6;border:1px solid #b9b9b9"></div>
<div class="a" style="left:489.4000000000001px;top:243.74px;width:6.34px;height:25px;background:#abaaf5"></div>
<div class="t" style="left:579.64px;top:249.63px;font-size:17.5px;color:#2b2b2b;transform:scaleX(0.9350);transform-origin:0 0;">3.0 %</div>
<div class="t" style="left:761.06px;top:249.63px;font-size:17.5px;color:#2b2b2b;transform:scaleX(0.9600);transform-origin:0 0;">14</div>
<div class="t" style="left:854.56px;top:249.63px;font-size:17.5px;color:#2b2b2b;transform:scaleX(0.9600);transform-origin:0 0;">3</div>
<div class="t" style="left:886.20px;top:249.63px;font-size:17.5px;color:#2b2b2b;transform:scaleX(1.0400);transform-origin:0 0;">3/5/2022</div>
<div class="t" style="left:1030.70px;top:249.63px;font-size:17.5px;color:#2b2b2b;transform:scaleX(1.0400);transform-origin:0 0;">3/13/2022</div>
<div class="t" style="left:1175.30px;top:249.63px;font-size:17.5px;color:#2b2b2b;">schr</div>
<svg style="left:17px;top:276.92px" width="16" height="22" viewBox="0 0 16 22"><path d="M1 2 L5 1 L5 3 L14 3 L14 19 L5 19 L3 21 L1 20 Z" fill="#f4cf66"/><path d="M1 2 L5 1 L5 19 L3 21 L1 20 Z" fill="#fbe3a0"/><rect x="5" y="3" width="9" height="16" fill="#f6d372"/><rect x="11" y="12" width="3" height="7" fill="#f1c457"/></svg>
<div class="t" style="left:47.60px;top:279.81px;font-size:17.5px;color:#2b2b2b;">Marcus Uhrzeit</div>
<div class="t" style="left:280.51px;top:279.81px;font-size:17.5px;color:#2b2b2b;transform:scaleX(0.9630);transform-origin:0 0;">190.7 MB</div>
<div class="t" style="left:409.01px;top:279.81px;font-size:17.5px;color:#2b2b2b;transform:scaleX(0.9630);transform-origin:0 0;">190.7 MB</div>
<div class="a" style="left:488.4000000000001px;top:272.92px;width:213.5px;height:27px;background:#d6d6d6;border:1px solid #b9b9b9"></div>
<div class="a" style="left:489.4000000000001px;top:273.92px;width:5.92px;height:25px;background:#abaaf5"></div>
<div class="t" style="left:579.64px;top:279.81px;font-size:17.5px;color:#2b2b2b;transform:scaleX(0.9350);transform-origin:0 0;">2.8 %</div>
<div class="t" style="left:771.36px;top:279.81px;font-size:17.5px;color:#2b2b2b;transform:scaleX(0.9600);transform-origin:0 0;">8</div>
<div class="t" style="left:854.56px;top:279.81px;font-size:17.5px;color:#2b2b2b;transform:scaleX(0.9600);transform-origin:0 0;">1</div>
<div class="t" style="left:885.16px;top:279.81px;font-size:17.5px;color:#2b2b2b;transform:scaleX(1.0400);transform-origin:0 0;">1/21/2022</div>
<div class="t" style="left:1030.70px;top:279.81px;font-size:17.5px;color:#2b2b2b;transform:scaleX(1.0400);transform-origin:0 0;">3/13/2022</div>
<div class="t" style="left:1175.30px;top:279.81px;font-size:17.5px;color:#2b2b2b;">schr</div>
<svg style="left:17px;top:307.1px" width="16" height="22" viewBox="0 0 16 22"><path d="M1 2 L5 1 L5 3 L14 3 L14 19 L5 19 L3 21 L1 20 Z" fill="#f4cf66"/><path d="M1 2 L5 1 L5 19 L3 21 L1 20 Z" fill="#fbe3a0"/><rect x="5" y="3" width="9" height="16" fill="#f6d372"/><rect x="11" y="12" width="3" height="7" fill="#f1c457"/></svg>
<div class="t" style="left:47.57px;top:309.99px;font-size:17.5px;color:#2b2b2b;transform:scaleX(1.0321);transform-origin:0 0;">Martin Cleaning</div>
<div class="t" style="left:280.51px;top:309.99px;font-size:17.5px;color:#2b2b2b;transform:scaleX(0.9630);transform-origin:0 0;">183.7 MB</div>
<div class="t" style="left:409.01px;top:309.99px;font-size:17.5px;color:#2b2b2b;transform:scaleX(0.9630);transform-origin:0 0;">183.8 MB</div>
<div class="a" style="left:488.4000000000001px;top:303.1px;width:213.5px;height:27px;background:#d6d6d6;border:1px solid #b9b9b9"></div>
<div class="a" style="left:489.4000000000001px;top:304.1px;width:5.71px;height:25px;background:#abaaf5"></div>
<div class="t" style="left:579.64px;top:309.99px;font-size:17.5px;color:#2b2b2b;transform:scaleX(0.9350);transform-origin:0 0;">2.7 %</div>
<div class="t" style="left:762.02px;top:309.99px;font-size:17.5px;color:#2b2b2b;transform:scaleX(0.9600);transform-origin:0 0;">36</div>
<div class="t" style="left:854.56px;top:309.99px;font-size:17.5px;color:#2b2b2b;transform:scaleX(0.9600);transform-origin:0 0;">1</div>
<div class="t" style="left:886.20px;top:309.99px;font-size:17.5px;color:#2b2b2b;transform:scaleX(1.0400);transform-origin:0 0;">3/13/2022</div>
<div class="t" style="left:1030.70px;top:309.99px;font-size:17.5px;color:#2b2b2b;transform:scaleX(1.0400);transform-origin:0 0;">3/13/2022</div>
<div class="t" style="left:1175.30px;top:309.99px;font-size:17.5px;color:#2b2b2b;">schr</div>
<svg style="left:17px;top:337.28px" width="16" height="22" viewBox="0 0 16 22"><path d="M1 2 L5 1 L5 3 L14 3 L14 19 L5 19 L3 21 L1 20 Z" fill="#f4cf66"/><path d="M1 2 L5 1 L5 19 L3 21 L1 20 Z" fill="#fbe3a0"/><rect x="5" y="3" width="9" height="16" fill="#f6d372"/><rect x="11" y="12" width="3" height="7" fill="#f1c457"/></svg>
<div class="t" style="left:47.61px;top:340.17px;font-size:17.5px;color:#2b2b2b;transform:scaleX(0.9878);transform-origin:0 0;">Photoshop SpaceOb...</div>
<div class="t" style="left:280.51px;top:340.17px;font-size:17.5px;color:#2b2b2b;transform:scaleX(0.9630);transform-origin:0 0;">183.6 MB</div>
<div class="t" style="left:409.01px;top:340.17px;font-size:17.5px;color:#2b2b2b;transform:scaleX(0.9630);transform-origin:0 0;">183.6 MB</div>
<div class="a" style="left:488.4000000000001px;top:333.28px;width:213.5px;height:27px;background:#d6d6d6;border:1px solid #b9b9b9"></div>
<div class="a" style="left:489.4000000000001px;top:334.28px;width:5.71px;height:25px;background:#abaaf5"></div>
<div class="t" style="left:579.64px;top:340.17px;font-size:17.5px;color:#2b2b2b;transform:scaleX(0.9350);transform-origin:0 0;">2.7 %</div>
<div class="t" style="left:762.02px;top:340.17px;font-size:17.5px;color:#2b2b2b;transform:scaleX(0.9600);transform-origin:0 0;">13</div>
<div class="t" style="left:853.60px;top:340.17px;font-size:17.5px;color:#2b2b2b;transform:scaleX(0.9600);transform-origin:0 0;">0</div>
<div class="t" style="left:886.20px;top:340.17px;font-size:17.5px;color:#2b2b2b;transform:scaleX(1.0400);transform-origin:0 0;">3/5/2022</div>
<div class="t" style="left:1030.70px;top:340.17px;font-size:17.5px;color:#2b2b2b;transform:scaleX(1.0400);transform-origin:0 0;">3/13/2022</div>
<div class="t" style="left:1175.30px;top:340.17px;font-size:17.5px;color:#2b2b2b;">schr</div>
<svg style="left:17px;top:367.46px" width="16" height="22" viewBox="0 0 16 22"><path d="M1 2 L5 1 L5 3 L14 3 L14 19 L5 19 L3 21 L1 20 Z" fill="#f4cf66"/><path d="M1 2 L5 1 L5 19 L3 21 L1 20 Z" fill="#fbe3a0"/><rect x="5" y="3" width="9" height="16" fill="#f6d372"/><rect x="11" y="12" width="3" height="7" fill="#f1c457"/></svg>
<div class="t" style="left:48.60px;top:370.35px;font-size:17.5px;color:#2b2b2b;transform:scaleX(1.0408);transform-origin:0 0;">Administrator August</div>
<div class="t" style="left:280.51px;top:370.35px;font-size:17.5px;color:#2b2b2b;transform:scaleX(0.9630);transform-origin:0 0;">182.4 MB</div>
<div class="t" style="left:409.01px;top:370.35px;font-size:17.5px;color:#2b2b2b;transform:scaleX(0.9630);transform-origin:0 0;">182.4 MB</div>
<div class="a" style="left:488.4000000000001px;top:363.46px;width:213.5px;height:27px;background:#d6d6d6;border:1px solid #b9b9b9"></div>
<div class="a" style="left:489.4000000000001px;top:364.46px;width:5.5px;height:25px;background:#abaaf5"></div>
<div class="t" style="left:579.64px;top:370.35px;font-size:17.5px;color:#2b2b2b;transform:scaleX(0.9350);transform-origin:0 0;">2.6 %</div>
<div class="t" style="left:762.02px;top:370.35px;font-size:17.5px;color:#2b2b2b;transform:scaleX(0.9600);transform-origin:0 0;">31</div>
<div class="t" style="left:853.60px;top:370.35px;font-size:17.5px;color:#2b2b2b;transform:scaleX(0.9600);transform-origin:0 0;">0</div>
<div class="t" style="left:886.20px;top:370.35px;font-size:17.5px;color:#2b2b2b;transform:scaleX(1.0400);transform-origin:0 0;">3/13/2022</div>
<div class="t" style="left:1030.70px;top:370.35px;font-size:17.5px;color:#2b2b2b;transform:scaleX(1.0400);transform-origin:0 0;">3/13/2022</div>
<div class="t" style="left:1175.30px;top:370.35px;font-size:17.5px;color:#2b2b2b;">schr</div>
<svg style="left:17px;top:397.64px" width="16" height="22" viewBox="0 0 16 22"><path d="M1 2 L5 1 L5 3 L14 3 L14 19 L5 19 L3 21 L1 20 Z" fill="#f4cf66"/><path d="M1 2 L5 1 L5 19 L3 21 L1 20 Z" fill="#fbe3a0"/><rect x="5" y="3" width="9" height="16" fill="#f6d372"/><rect x="11" y="12" width="3" height="7" fill="#f1c457"/></svg>
<div class="t" style="left:48.60px;top:400.53px;font-size:17.5px;color:#2b2b2b;transform:scaleX(0.8665);transform-origin:0 0;">$RECYCLE.BIN</div>
<div class="t" style="left:280.51px;top:400.53px;font-size:17.5px;color:#2b2b2b;transform:scaleX(0.9630);transform-origin:0 0;">163.8 MB</div>
<div class="t" style="left:409.01px;top:400.53px;font-size:17.5px;color:#2b2b2b;transform:scaleX(0.9630);transform-origin:0 0;">163.9 MB</div>
<div class="a" style="left:488.4000000000001px;top:393.64px;width:213.5px;height:27px;background:#d6d6d6;border:1px solid #b9b9b9"></div>
<div class="a" style="left:489.4000000000001px;top:394.64px;width:5.08px;height:25px;background:#abaaf5"></div>
<div class="t" style="left:579.64px;top:400.53px;font-size:17.5px;color:#2b2b2b;transform:scaleX(0.9350);transform-origin:0 0;">2.4 %</div>
<div class="t" style="left:762.02px;top:400.53px;font-size:17.5px;color:#2b2b2b;transform:scaleX(0.9600);transform-origin:0 0;">58</div>
<div class="t" style="left:853.60px;top:400.53px;font-size:17.5px;color:#2b2b2b;transform:scaleX(0.9600);transform-origin:0 0;">4</div>
<div class="t" style="left:886.20px;top:400.53px;font-size:17.5px;color:#2b2b2b;transform:scaleX(1.0400);transform-origin:0 0;">3/10/2022</div>
<div class="t" style="left:1030.70px;top:400.53px;font-size:17.5px;color:#2b2b2b;transform:scaleX(1.0400);transform-origin:0 0;">3/13/2022</div>
<div class="t" style="left:1175.30px;top:400.53px;font-size:17.5px;color:#2b2b2b;">S-1-</div>
<svg style="left:17px;top:427.82px" width="16" height="22" viewBox="0 0 16 22"><path d="M1 2 L5 1 L5 3 L14 3 L14 19 L5 19 L3 21 L1 20 Z" fill="#f4cf66"/><path d="M1 2 L5 1 L5 19 L3 21 L1 20 Z" fill="#fbe3a0"/><rect x="5" y="3" width="9" height="16" fill="#f6d372"/><rect x="11" y="12" width="3" height="7" fill="#f1c457"/></svg>
<div class="t" style="left:47.56px;top:430.71px;font-size:17.5px;color:#2b2b2b;transform:scaleX(1.0360);transform-origin:0 0;">Datei Nutzer</div>
<div class="t" style="left:289.89px;top:430.71px;font-size:17.5px;color:#2b2b2b;transform:scaleX(0.9630);transform-origin:0 0;">71.1 MB</div>
<div class="t" style="left:418.39px;top:430.71px;font-size:17.5px;color:#2b2b2b;transform:scaleX(0.9630);transform-origin:0 0;">71.1 MB</div>
<div class="a" style="left:488.4000000000001px;top:423.82px;width:213.5px;height:27px;background:#d6d6d6;border:1px solid #b9b9b9"></div>
<div class="a" style="left:489.4000000000001px;top:424.82px;width:2.12px;height:25px;background:#abaaf5"></div>
<div class="t" style="left:579.17px;top:430.71px;font-size:17.5px;color:#2b2b2b;transform:scaleX(0.9350);transform-origin:0 0;">1.0 %</div>
<div class="t" style="left:771.36px;top:430.71px;font-size:17.5px;color:#2b2b2b;transform:scaleX(0.9600);transform-origin:0 0;">9</div>
<div class="t" style="left:854.56px;top:430.71px;font-size:17.5px;color:#2b2b2b;transform:scaleX(0.9600);transform-origin:0 0;">1</div>
<div class="t" style="left:885.16px;top:430.71px;font-size:17.5px;color:#2b2b2b;transform:scaleX(1.0400);transform-origin:0 0;">1/21/2022</div>
<div class="t" style="left:1030.70px;top:430.71px;font-size:17.5px;color:#2b2b2b;transform:scaleX(1.0400);transform-origin:0 0;">3/13/2022</div>
<div class="t" style="left:1175.30px;top:430.71px;font-size:17.5px;color:#2b2b2b;">schr</div>
<svg style="left:13px;top:456.0px" width="26" height="25" viewBox="0 0 26 25"><path d="M5.8 1 H17.5 L24 7.5 V24.2 H5.8 Z" fill="#fff" stroke="#a5a5a5" stroke-width="1.2"/><path d="M17.5 1 V7.5 H24" fill="#fff" stroke="#b5b5b5" stroke-width="1"/><path d="M15 7 A5 5 0 1 0 20 12 H15 Z" fill="#8c8c8c"/><path d="M14 15.5 H21 M14 18 H21" stroke="#f0b08a" stroke-width="0.9"/><rect x="0.9" y="4.3" width="12" height="17.7" fill="#cb4a22"/><path d="M4.2 18.5 V8.5 H7.5 Q10 8.5 10 11.2 Q10 14 7.5 14 H4.2" fill="none" stroke="#fbe3d6" stroke-width="1.8"/></svg>
<div class="t" style="left:47.61px;top:460.89px;font-size:17.5px;color:#2b2b2b;transform:scaleX(0.9898);transform-origin:0 0;">UltraSearch Volker.p...</div>
<div class="t" style="left:289.89px;top:460.89px;font-size:17.5px;color:#2b2b2b;transform:scaleX(0.9630);transform-origin:0 0;">62.4 MB</div>
<div class="t" style="left:418.39px;top:460.89px;font-size:17.5px;color:#2b2b2b;transform:scaleX(0.9630);transform-origin:0 0;">62.4 MB</div>
<div class="a" style="left:488.4000000000001px;top:454.0px;width:213.5px;height:27px;background:#d6d6d6;border:1px solid #b9b9b9"></div>
<div class="a" style="left:489.4000000000001px;top:455.0px;width:1.9px;height:25px;background:#abaaf5"></div>
<div class="t" style="left:579.64px;top:460.89px;font-size:17.5px;color:#2b2b2b;transform:scaleX(0.9350);transform-origin:0 0;">0.9 %</div>
<div class="t" style="left:771.36px;top:460.89px;font-size:17.5px;color:#2b2b2b;transform:scaleX(0.9600);transform-origin:0 0;">1</div>
<div class="t" style="left:853.60px;top:460.89px;font-size:17.5px;color:#2b2b2b;transform:scaleX(0.9600);transform-origin:0 0;">0</div>
<div class="t" style="left:886.20px;top:460.89px;font-size:17.5px;color:#2b2b2b;transform:scaleX(1.0400);transform-origin:0 0;">3/5/2022</div>
<div class="t" style="left:1030.70px;top:460.89px;font-size:17.5px;color:#2b2b2b;transform:scaleX(1.0400);transform-origin:0 0;">3/6/2022</div>
<div class="t" style="left:1175.30px;top:460.89px;font-size:17.5px;color:#2b2b2b;">schr</div>
<svg style="left:17px;top:488.18px" width="16" height="22" viewBox="0 0 16 22"><path d="M1 2 L5 1 L5 3 L14 3 L14 19 L5 19 L3 21 L1 20 Z" fill="#f4cf66"/><path d="M1 2 L5 1 L5 19 L3 21 L1 20 Z" fill="#fbe3a0"/><rect x="5" y="3" width="9" height="16" fill="#f6d372"/><rect x="11" y="12" width="3" height="7" fill="#f1c457"/></svg>
<div class="t" style="left:47.58px;top:491.07px;font-size:17.5px;color:#2b2b2b;transform:scaleX(1.0222);transform-origin:0 0;">Date Cleaning</div>
<div class="t" style="left:299.26px;top:491.07px;font-size:17.5px;color:#2b2b2b;transform:scaleX(0.9630);transform-origin:0 0;">7.3 MB</div>
<div class="t" style="left:427.76px;top:491.07px;font-size:17.5px;color:#2b2b2b;transform:scaleX(0.9630);transform-origin:0 0;">7.3 MB</div>
<div class="a" style="left:488.4000000000001px;top:484.18px;width:213.5px;height:27px;background:#d6d6d6;border:1px solid #b9b9b9"></div>
<div class="t" style="left:579.64px;top:491.07px;font-size:17.5px;color:#2b2b2b;transform:scaleX(0.9350);transform-origin:0 0;">0.1 %</div>
<div class="t" style="left:761.06px;top:491.07px;font-size:17.5px;color:#2b2b2b;transform:scaleX(0.9600);transform-origin:0 0;">14</div>
<div class="t" style="left:853.60px;top:491.07px;font-size:17.5px;color:#2b2b2b;transform:scaleX(0.9600);transform-origin:0 0;">0</div>
<div class="t" style="left:886.20px;top:491.07px;font-size:17.5px;color:#2b2b2b;transform:scaleX(1.0400);transform-origin:0 0;">3/5/2022</div>
<div class="t" style="left:1030.70px;top:491.07px;font-size:17.5px;color:#2b2b2b;transform:scaleX(1.0400);transform-origin:0 0;">3/13/2022</div>
<div class="t" style="left:1175.30px;top:491.07px;font-size:17.5px;color:#2b2b2b;">schr</div>
<svg style="left:17px;top:518.36px" width="16" height="22" viewBox="0 0 16 22"><path d="M1 2 L5 1 L5 3 L14 3 L14 19 L5 19 L3 21 L1 20 Z" fill="#f4cf66"/><path d="M1 2 L5 1 L5 19 L3 21 L1 20 Z" fill="#fbe3a0"/><rect x="5" y="3" width="9" height="16" fill="#f6d372"/><rect x="11" y="12" width="3" height="7" fill="#f1c457"/></svg>
<div class="t" style="left:47.54px;top:521.25px;font-size:17.5px;color:#2b2b2b;transform:scaleX(1.0571);transform-origin:0 0;">Illustrator Month</div>
<div class="t" style="left:299.26px;top:521.25px;font-size:17.5px;color:#2b2b2b;transform:scaleX(0.9630);transform-origin:0 0;">6.0 MB</div>
<div class="t" style="left:427.76px;top:521.25px;font-size:17.5px;color:#2b2b2b;transform:scaleX(0.9630);transform-origin:0 0;">6.0 MB</div>
<div class="a" style="left:488.4000000000001px;top:514.36px;width:213.5px;height:27px;background:#d6d6d6;border:1px solid #b9b9b9"></div>
<div class="t" style="left:579.64px;top:521.25px;font-size:17.5px;color:#2b2b2b;transform:scaleX(0.9350);transform-origin:0 0;">0.1 %</div>
<div class="t" style="left:763.26px;top:521.25px;font-size:17.5px;color:#2b2b2b;transform:scaleX(0.9600);transform-origin:0 0;">11</div>
<div class="t" style="left:853.60px;top:521.25px;font-size:17.5px;color:#2b2b2b;transform:scaleX(0.9600);transform-origin:0 0;">0</div>
<div class="t" style="left:885.16px;top:521.25px;font-size:17.5px;color:#2b2b2b;transform:scaleX(1.0400);transform-origin:0 0;">1/21/2022</div>
<div class="t" style="left:1030.70px;top:521.25px;font-size:17.5px;color:#2b2b2b;transform:scaleX(1.0400);transform-origin:0 0;">3/13/2022</div>
<div class="t" style="left:1175.30px;top:521.25px;font-size:17.5px;color:#2b2b2b;">schr</div>
<svg style="left:17px;top:548.54px" width="16" height="22" viewBox="0 0 16 22"><path d="M1 2 L5 1 L5 3 L14 3 L14 19 L5 19 L3 21 L1 20 Z" fill="#f4cf66"/><path d="M1 2 L5 1 L5 19 L3 21 L1 20 Z" fill="#fbe3a0"/><rect x="5" y="3" width="9" height="16" fill="#f6d372"/><rect x="11" y="12" width="3" height="7" fill="#f1c457"/></svg>
<div class="t" style="left:47.61px;top:551.43px;font-size:17.5px;color:#2b2b2b;transform:scaleX(0.9877);transform-origin:0 0;">Filter Laura</div>
<div class="t" style="left:299.26px;top:551.43px;font-size:17.5px;color:#2b2b2b;transform:scaleX(0.9630);transform-origin:0 0;">5.7 MB</div>
<div class="t" style="left:427.76px;top:551.43px;font-size:17.5px;color:#2b2b2b;transform:scaleX(0.9630);transform-origin:0 0;">5.8 MB</div>
<div class="a" style="left:488.4000000000001px;top:544.54px;width:213.5px;height:27px;background:#d6d6d6;border:1px solid #b9b9b9"></div>
<div class="t" style="left:579.64px;top:551.43px;font-size:17.5px;color:#2b2b2b;transform:scaleX(0.9350);transform-origin:0 0;">0.1 %</div>
<div class="t" style="left:761.06px;top:551.43px;font-size:17.5px;color:#2b2b2b;transform:scaleX(0.9600);transform-origin:0 0;">14</div>
<div class="t" style="left:853.60px;top:551.43px;font-size:17.5px;color:#2b2b2b;transform:scaleX(0.9600);transform-origin:0 0;">0</div>
<div class="t" style="left:885.16px;top:551.43px;font-size:17.5px;color:#2b2b2b;transform:scaleX(1.0400);transform-origin:0 0;">12/30/2021</div>
<div class="t" style="left:1030.70px;top:551.43px;font-size:17.5px;color:#2b2b2b;transform:scaleX(1.0400);transform-origin:0 0;">3/13/2022</div>
<div class="t" style="left:1175.30px;top:551.43px;font-size:17.5px;color:#2b2b2b;">schr</div>
<svg style="left:17px;top:578.72px" width="16" height="22" viewBox="0 0 16 22"><path d="M1 2 L5 1 L5 3 L14 3 L14 19 L5 19 L3 21 L1 20 Z" fill="#f4cf66"/><path d="M1 2 L5 1 L5 19 L3 21 L1 20 Z" fill="#fbe3a0"/><rect x="5" y="3" width="9" height="16" fill="#f6d372"/><rect x="11" y="12" width="3" height="7" fill="#f1c457"/></svg>
<div class="t" style="left:47.56px;top:581.61px;font-size:17.5px;color:#2b2b2b;transform:scaleX(1.0421);transform-origin:0 0;">Helmut Employer</div>
<div class="t" style="left:299.26px;top:581.61px;font-size:17.5px;color:#2b2b2b;transform:scaleX(0.9630);transform-origin:0 0;">4.9 MB</div>
<div class="t" style="left:427.76px;top:581.61px;font-size:17.5px;color:#2b2b2b;transform:scaleX(0.9630);transform-origin:0 0;">4.9 MB</div>
<div class="a" style="left:488.4000000000001px;top:574.72px;width:213.5px;height:27px;background:#d6d6d6;border:1px solid #b9b9b9"></div>
<div class="t" style="left:579.64px;top:581.61px;font-size:17.5px;color:#2b2b2b;transform:scaleX(0.9350);transform-origin:0 0;">0.1 %</div>
<div class="t" style="left:771.36px;top:581.61px;font-size:17.5px;color:#2b2b2b;transform:scaleX(0.9600);transform-origin:0 0;">8</div>
<div class="t" style="left:853.60px;top:581.61px;font-size:17.5px;color:#2b2b2b;transform:scaleX(0.9600);transform-origin:0 0;">0</div>
<div class="t" style="left:885.16px;top:581.61px;font-size:17.5px;color:#2b2b2b;transform:scaleX(1.0400);transform-origin:0 0;">12/30/2021</div>
<div class="t" style="left:1030.70px;top:581.61px;font-size:17.5px;color:#2b2b2b;transform:scaleX(1.0400);transform-origin:0 0;">3/13/2022</div>
<div class="t" style="left:1175.30px;top:581.61px;font-size:17.5px;color:#2b2b2b;">schr</div>
<svg style="left:16px;top:609.9px" width="20" height="22" viewBox="0 0 20 22"><path d="M0.6 0.6 H12.5 L17.6 5.7 V20.4 H0.6 Z" fill="#f9f9f9" stroke="#cfcfcf" stroke-width="1.1"/><path d="M12.5 0.6 V5.7 H17.6" fill="#fff" stroke="#d8d8d8" stroke-width="1"/><rect x="4.5" y="7" width="6.5" height="7.5" fill="#4a6584"/><path d="M5.5 8.5 H10 M5.5 11 H10" stroke="#8aa2bd" stroke-width="0.8"/><circle cx="11.5" cy="12" r="3.8" fill="#3d92e4"/><path d="M10 10.5 L12.5 12 L10 13.5 Z" fill="#fff"/></svg>
<div class="t" style="left:48.60px;top:611.79px;font-size:17.5px;color:#2b2b2b;transform:scaleX(1.0082);transform-origin:0 0;">Angestellter Nutzer....</div>
<div class="t" style="left:283.31px;top:611.79px;font-size:17.5px;color:#2b2b2b;transform:scaleX(0.9630);transform-origin:0 0;">989.1 KB</div>
<div class="t" style="left:411.81px;top:611.79px;font-size:17.5px;color:#2b2b2b;transform:scaleX(0.9630);transform-origin:0 0;">992.0 KB</div>
<div class="a" style="left:488.4000000000001px;top:604.9px;width:213.5px;height:27px;background:#d6d6d6;border:1px solid #b9b9b9"></div>
<div class="t" style="left:579.64px;top:611.79px;font-size:17.5px;color:#2b2b2b;transform:scaleX(0.9350);transform-origin:0 0;">0.0 %</div>
<div class="t" style="left:771.36px;top:611.79px;font-size:17.5px;color:#2b2b2b;transform:scaleX(0.9600);transform-origin:0 0;">1</div>
<div class="t" style="left:853.60px;top:611.79px;font-size:17.5px;color:#2b2b2b;transform:scaleX(0.9600);transform-origin:0 0;">0</div>
<div class="t" style="left:886.20px;top:611.79px;font-size:17.5px;color:#2b2b2b;transform:scaleX(1.0400);transform-origin:0 0;">3/6/2022</div>
<div class="t" style="left:1030.70px;top:611.79px;font-size:17.5px;color:#2b2b2b;transform:scaleX(1.0400);transform-origin:0 0;">3/5/2022</div>
<div class="t" style="left:1175.30px;top:611.79px;font-size:17.5px;color:#2b2b2b;">schr</div>
<svg style="left:16px;top:640.08px" width="20" height="22" viewBox="0 0 20 22"><path d="M0.6 0.6 H12.5 L17.6 5.7 V20.4 H0.6 Z" fill="#f9f9f9" stroke="#cfcfcf" stroke-width="1.1"/><path d="M12.5 0.6 V5.7 H17.6" fill="#fff" stroke="#d8d8d8" stroke-width="1"/><rect x="4.5" y="7" width="6.5" height="7.5" fill="#4a6584"/><path d="M5.5 8.5 H10 M5.5 11 H10" stroke="#8aa2bd" stroke-width="0.8"/><circle cx="11.5" cy="12" r="3.8" fill="#3d92e4"/><path d="M10 10.5 L12.5 12 L10 13.5 Z" fill="#fff"/></svg>
<div class="t" style="left:48.60px;top:641.97px;font-size:17.5px;color:#2b2b2b;transform:scaleX(0.9903);transform-origin:0 0;">Volker Steve.mov</div>
<div class="t" style="left:283.31px;top:641.97px;font-size:17.5px;color:#2b2b2b;transform:scaleX(0.9630);transform-origin:0 0;">991.3 KB</div>
<div class="t" style="left:411.81px;top:641.97px;font-size:17.5px;color:#2b2b2b;transform:scaleX(0.9630);transform-origin:0 0;">992.0 KB</div>
<div class="a" style="left:488.4000000000001px;top:635.08px;width:213.5px;height:27px;background:#d6d6d6;border:1px solid #b9b9b9"></div>
<div class="t" style="left:579.64px;top:641.97px;font-size:17.5px;color:#2b2b2b;transform:scaleX(0.9350);transform-origin:0 0;">0.0 %</div>
<div class="t" style="left:771.36px;top:641.97px;font-size:17.5px;color:#2b2b2b;transform:scaleX(0.9600);transform-origin:0 0;">1</div>
<div class="t" style="left:853.60px;top:641.97px;font-size:17.5px;color:#2b2b2b;transform:scaleX(0.9600);transform-origin:0 0;">0</div>
<div class="t" style="left:886.20px;top:641.97px;font-size:17.5px;color:#2b2b2b;transform:scaleX(1.0400);transform-origin:0 0;">3/5/2022</div>
<div class="t" style="left:1030.70px;top:641.97px;font-size:17.5px;color:#2b2b2b;transform:scaleX(1.0400);transform-origin:0 0;">3/5/2022</div>
<div class="t" style="left:1175.30px;top:641.97px;font-size:17.5px;color:#2b2b2b;">schr</div>
<svg style="left:13px;top:668.26px" width="26" height="25" viewBox="0 0 26 25"><path d="M6.8 0.8 H18 L24.2 7 V23.6 H6.8 Z" fill="#fff" stroke="#a0a0a0" stroke-width="1.1"/><path d="M18 0.8 V7 H24.2" fill="#fff" stroke="#b0b0b0" stroke-width="1"/><path d="M14 9.5 H22.5 M14 13 H22.5 M14 16.5 H22.5 M14 20 H22.5 M18.2 8.5 V21" stroke="#9fc3a8" stroke-width="1.4"/><rect x="0.5" y="3.6" width="12" height="16.6" fill="#217346"/><path d="M3.6 7.5 L9.2 16.5 M9.2 7.5 L3.6 16.5" stroke="#e8f5ea" stroke-width="1.7"/></svg>
<div class="t" style="left:47.58px;top:672.15px;font-size:17.5px;color:#2b2b2b;transform:scaleX(1.0226);transform-origin:0 0;">Martin Filter.xlsx</div>
<div class="t" style="left:283.31px;top:672.15px;font-size:17.5px;color:#2b2b2b;transform:scaleX(0.9630);transform-origin:0 0;">958.2 KB</div>
<div class="t" style="left:411.81px;top:672.15px;font-size:17.5px;color:#2b2b2b;transform:scaleX(0.9630);transform-origin:0 0;">960.0 KB</div>
<div class="a" style="left:488.4000000000001px;top:665.26px;width:213.5px;height:27px;background:#d6d6d6;border:1px solid #b9b9b9"></div>
<div class="t" style="left:579.64px;top:672.15px;font-size:17.5px;color:#2b2b2b;transform:scaleX(0.9350);transform-origin:0 0;">0.0 %</div>
<div class="t" style="left:771.36px;top:672.15px;font-size:17.5px;color:#2b2b2b;transform:scaleX(0.9600);transform-origin:0 0;">1</div>
<div class="t" style="left:853.60px;top:672.15px;font-size:17.5px;color:#2b2b2b;transform:scaleX(0.9600);transform-origin:0 0;">0</div>
<div class="t" style="left:886.20px;top:672.15px;font-size:17.5px;color:#2b2b2b;transform:scaleX(1.0400);transform-origin:0 0;">3/5/2022</div>
<div class="t" style="left:1030.70px;top:672.15px;font-size:17.5px;color:#2b2b2b;transform:scaleX(1.0400);transform-origin:0 0;">3/5/2022</div>
<div class="t" style="left:1175.30px;top:672.15px;font-size:17.5px;color:#2b2b2b;">schr</div>
<svg style="left:13px;top:698.44px" width="26" height="25" viewBox="0 0 26 25"><path d="M6.8 0.8 H18 L24.2 7 V23.6 H6.8 Z" fill="#fff" stroke="#a0a0a0" stroke-width="1.1"/><path d="M18 0.8 V7 H24.2" fill="#fff" stroke="#b0b0b0" stroke-width="1"/><path d="M14 10 H22.5 M14 13 H22.5 M14 16 H22.5 M14 19 H22.5" stroke="#9a9a9a" stroke-width="1.2"/><rect x="0.5" y="4.6" width="12" height="15.6" fill="#2b5e98"/><path d="M2.6 8.5 L4.5 16 L6.5 10.5 L8.5 16 L10.4 8.5" fill="none" stroke="#eef2fa" stroke-width="1.5"/></svg>
<div class="t" style="left:48.60px;top:702.33px;font-size:17.5px;color:#2b2b2b;transform:scaleX(0.9886);transform-origin:0 0;">Treffen Virtual Tree ...</div>
<div class="t" style="left:283.31px;top:702.33px;font-size:17.5px;color:#2b2b2b;transform:scaleX(0.9630);transform-origin:0 0;">948.0 KB</div>
<div class="t" style="left:411.81px;top:702.33px;font-size:17.5px;color:#2b2b2b;transform:scaleX(0.9630);transform-origin:0 0;">948.0 KB</div>
<div class="a" style="left:488.4000000000001px;top:695.44px;width:213.5px;height:27px;background:#d6d6d6;border:1px solid #b9b9b9"></div>
<div class="t" style="left:579.64px;top:702.33px;font-size:17.5px;color:#2b2b2b;transform:scaleX(0.9350);transform-origin:0 0;">0.0 %</div>
<div class="t" style="left:771.36px;top:702.33px;font-size:17.5px;color:#2b2b2b;transform:scaleX(0.9600);transform-origin:0 0;">1</div>
<div class="t" style="left:853.60px;top:702.33px;font-size:17.5px;color:#2b2b2b;transform:scaleX(0.9600);transform-origin:0 0;">0</div>
<div class="t" style="left:886.20px;top:702.33px;font-size:17.5px;color:#2b2b2b;transform:scaleX(1.0400);transform-origin:0 0;">3/5/2022</div>
<div class="t" style="left:1030.70px;top:702.33px;font-size:17.5px;color:#2b2b2b;transform:scaleX(1.0400);transform-origin:0 0;">3/5/2022</div>
<div class="t" style="left:1175.30px;top:702.33px;font-size:17.5px;color:#2b2b2b;">schr</div>
<svg style="left:16px;top:730.62px" width="20" height="22" viewBox="0 0 20 22"><path d="M0.6 0.6 H12.5 L17.6 5.7 V20.4 H0.6 Z" fill="#f9f9f9" stroke="#cfcfcf" stroke-width="1.1"/><path d="M12.5 0.6 V5.7 H17.6" fill="#fff" stroke="#d8d8d8" stroke-width="1"/><rect x="4.5" y="7" width="6.5" height="7.5" fill="#4a6584"/><path d="M5.5 8.5 H10 M5.5 11 H10" stroke="#8aa2bd" stroke-width="0.8"/><circle cx="11.5" cy="12" r="3.8" fill="#3d92e4"/><path d="M10 10.5 L12.5 12 L10 13.5 Z" fill="#fff"/></svg>
<div class="t" style="left:48.60px;top:732.51px;font-size:17.5px;color:#2b2b2b;">Veranstalter Bug.mov</div>
<div class="t" style="left:283.31px;top:732.51px;font-size:17.5px;color:#2b2b2b;transform:scaleX(0.9630);transform-origin:0 0;">928.1 KB</div>
<div class="t" style="left:411.81px;top:732.51px;font-size:17.5px;color:#2b2b2b;transform:scaleX(0.9630);transform-origin:0 0;">932.0 KB</div>
<div class="a" style="left:488.4000000000001px;top:725.62px;width:213.5px;height:27px;background:#d6d6d6;border:1px solid #b9b9b9"></div>
<div class="t" style="left:579.64px;top:732.51px;font-size:17.5px;color:#2b2b2b;transform:scaleX(0.9350);transform-origin:0 0;">0.0 %</div>
<div class="t" style="left:771.36px;top:732.51px;font-size:17.5px;color:#2b2b2b;transform:scaleX(0.9600);transform-origin:0 0;">1</div>
<div class="t" style="left:853.60px;top:732.51px;font-size:17.5px;color:#2b2b2b;transform:scaleX(0.9600);transform-origin:0 0;">0</div>
<div class="t" style="left:886.20px;top:732.51px;font-size:17.5px;color:#2b2b2b;transform:scaleX(1.0400);transform-origin:0 0;">3/5/2022</div>
<div class="t" style="left:1030.70px;top:732.51px;font-size:17.5px;color:#2b2b2b;transform:scaleX(1.0400);transform-origin:0 0;">3/5/2022</div>
<div class="t" style="left:1175.30px;top:732.51px;font-size:17.5px;color:#2b2b2b;">schr</div>
<svg style="left:16px;top:760.8px" width="20" height="22" viewBox="0 0 20 22"><path d="M0.6 0.6 H12.5 L17.6 5.7 V20.4 H0.6 Z" fill="#f9f9f9" stroke="#cfcfcf" stroke-width="1.1"/><path d="M12.5 0.6 V5.7 H17.6" fill="#fff" stroke="#d8d8d8" stroke-width="1"/><rect x="4.5" y="7" width="6.5" height="7.5" fill="#4a6584"/><path d="M5.5 8.5 H10 M5.5 11 H10" stroke="#8aa2bd" stroke-width="0.8"/><circle cx="11.5" cy="12" r="3.8" fill="#3d92e4"/><path d="M10 10.5 L12.5 12 L10 13.5 Z" fill="#fff"/></svg>
<div class="t" style="left:47.57px;top:762.69px;font-size:17.5px;color:#2b2b2b;transform:scaleX(1.0309);transform-origin:0 0;">E-Mail Ordner.mov</div>
<div class="t" style="left:283.31px;top:762.69px;font-size:17.5px;color:#2b2b2b;transform:scaleX(0.9630);transform-origin:0 0;">920.4 KB</div>
<div class="t" style="left:411.81px;top:762.69px;font-size:17.5px;color:#2b2b2b;transform:scaleX(0.9630);transform-origin:0 0;">924.0 KB</div>
<div class="a" style="left:488.4000000000001px;top:755.8px;width:213.5px;height:27px;background:#d6d6d6;border:1px solid #b9b9b9"></div>
<div class="t" style="left:579.64px;top:762.69px;font-size:17.5px;color:#2b2b2b;transform:scaleX(0.9350);transform-origin:0 0;">0.0 %</div>
<div class="t" style="left:771.36px;top:762.69px;font-size:17.5px;color:#2b2b2b;transform:scaleX(0.9600);transform-origin:0 0;">1</div>
<div class="t" style="left:853.60px;top:762.69px;font-size:17.5px;color:#2b2b2b;transform:scaleX(0.9600);transform-origin:0 0;">0</div>
<div class="t" style="left:886.20px;top:762.69px;font-size:17.5px;color:#2b2b2b;transform:scaleX(1.0400);transform-origin:0 0;">3/5/2022</div>
<div class="t" style="left:1030.70px;top:762.69px;font-size:17.5px;color:#2b2b2b;transform:scaleX(1.0400);transform-origin:0 0;">3/5/2022</div>
<div class="t" style="left:1175.30px;top:762.69px;font-size:17.5px;color:#2b2b2b;">schr</div>
<svg style="left:16px;top:790.98px" width="20" height="22" viewBox="0 0 20 22"><path d="M0.6 0.6 H12.5 L17.6 5.7 V20.4 H0.6 Z" fill="#f9f9f9" stroke="#cfcfcf" stroke-width="1.1"/><path d="M12.5 0.6 V5.7 H17.6" fill="#fff" stroke="#d8d8d8" stroke-width="1"/><rect x="4.5" y="7" width="6.5" height="7.5" fill="#4a6584"/><path d="M5.5 8.5 H10 M5.5 11 H10" stroke="#8aa2bd" stroke-width="0.8"/><circle cx="11.5" cy="12" r="3.8" fill="#3d92e4"/><path d="M10 10.5 L12.5 12 L10 13.5 Z" fill="#fff"/></svg>
<div class="t" style="left:47.59px;top:792.87px;font-size:17.5px;color:#2b2b2b;transform:scaleX(1.0088);transform-origin:0 0;">Bodo Excel.mov</div>
<div class="t" style="left:283.31px;top:792.87px;font-size:17.5px;color:#2b2b2b;transform:scaleX(0.9630);transform-origin:0 0;">915.5 KB</div>
<div class="t" style="left:411.81px;top:792.87px;font-size:17.5px;color:#2b2b2b;transform:scaleX(0.9630);transform-origin:0 0;">916.0 KB</div>
<div class="a" style="left:488.4000000000001px;top:785.98px;width:213.5px;height:27px;background:#d6d6d6;border:1px solid #b9b9b9"></div>
<div class="t" style="left:579.64px;top:792.87px;font-size:17.5px;color:#2b2b2b;transform:scaleX(0.9350);transform-origin:0 0;">0.0 %</div>
<div class="t" style="left:771.36px;top:792.87px;font-size:17.5px;color:#2b2b2b;transform:scaleX(0.9600);transform-origin:0 0;">1</div>
<div class="t" style="left:853.60px;top:792.87px;font-size:17.5px;color:#2b2b2b;transform:scaleX(0.9600);transform-origin:0 0;">0</div>
<div class="t" style="left:886.20px;top:792.87px;font-size:17.5px;color:#2b2b2b;transform:scaleX(1.0400);transform-origin:0 0;">3/5/2022</div>
<div class="t" style="left:1030.70px;top:792.87px;font-size:17.5px;color:#2b2b2b;transform:scaleX(1.0400);transform-origin:0 0;">3/5/2022</div>
<div class="t" style="left:1175.30px;top:792.87px;font-size:17.5px;color:#2b2b2b;">schr</div>
<svg style="left:13px;top:818.16px" width="26" height="25" viewBox="0 0 26 25"><path d="M5.8 1 H17.5 L24 7.5 V24.2 H5.8 Z" fill="#fff" stroke="#a5a5a5" stroke-width="1.2"/><path d="M17.5 1 V7.5 H24" fill="#fff" stroke="#b5b5b5" stroke-width="1"/><path d="M15 7 A5 5 0 1 0 20 12 H15 Z" fill="#8c8c8c"/><path d="M14 15.5 H21 M14 18 H21" stroke="#f0b08a" stroke-width="0.9"/><rect x="0.9" y="4.3" width="12" height="17.7" fill="#cb4a22"/><path d="M4.2 18.5 V8.5 H7.5 Q10 8.5 10 11.2 Q10 14 7.5 14 H4.2" fill="none" stroke="#fbe3d6" stroke-width="1.8"/></svg>
<div class="t" style="left:47.57px;top:823.05px;font-size:17.5px;color:#2b2b2b;transform:scaleX(1.0346);transform-origin:0 0;">Helene Bob.pptx</div>
<div class="t" style="left:283.31px;top:823.05px;font-size:17.5px;color:#2b2b2b;transform:scaleX(0.9630);transform-origin:0 0;">915.4 KB</div>
<div class="t" style="left:411.81px;top:823.05px;font-size:17.5px;color:#2b2b2b;transform:scaleX(0.9630);transform-origin:0 0;">916.0 KB</div>
<div class="a" style="left:488.4000000000001px;top:816.16px;width:213.5px;height:27px;background:#d6d6d6;border:1px solid #b9b9b9"></div>
<div class="t" style="left:579.64px;top:823.05px;font-size:17.5px;color:#2b2b2b;transform:scaleX(0.9350);transform-origin:0 0;">0.0 %</div>
<div class="t" style="left:771.36px;top:823.05px;font-size:17.5px;color:#2b2b2b;transform:scaleX(0.9600);transform-origin:0 0;">1</div>
<div class="t" style="left:853.60px;top:823.05px;font-size:17.5px;color:#2b2b2b;transform:scaleX(0.9600);transform-origin:0 0;">0</div>
<div class="t" style="left:886.20px;top:823.05px;font-size:17.5px;color:#2b2b2b;transform:scaleX(1.0400);transform-origin:0 0;">3/5/2022</div>
<div class="t" style="left:1030.70px;top:823.05px;font-size:17.5px;color:#2b2b2b;transform:scaleX(1.0400);transform-origin:0 0;">3/5/2022</div>
<div class="t" style="left:1175.30px;top:823.05px;font-size:17.5px;color:#2b2b2b;">schr</div>
<svg style="left:17px;top:850.34px" width="19" height="22" viewBox="0 0 19 22"><path d="M0.8 0.8 H12.3 L16.4 4.9 V21.5 H0.8 Z" fill="#fff" stroke="#9e9e9e" stroke-width="1.3"/><path d="M3.3 4 H10 M3.3 6.5 H14 M3.3 9 H14 M3.3 11.5 H14 M3.3 14 H14" stroke="#c8c8c8" stroke-width="1.3"/></svg>
<div class="t" style="left:47.59px;top:853.23px;font-size:17.5px;color:#2b2b2b;transform:scaleX(1.0100);transform-origin:0 0;">Internet Virus.txt</div>
<div class="t" style="left:283.31px;top:853.23px;font-size:17.5px;color:#2b2b2b;transform:scaleX(0.9630);transform-origin:0 0;">905.9 KB</div>
<div class="t" style="left:411.81px;top:853.23px;font-size:17.5px;color:#2b2b2b;transform:scaleX(0.9630);transform-origin:0 0;">908.0 KB</div>
<div class="a" style="left:488.4000000000001px;top:846.34px;width:213.5px;height:27px;background:#d6d6d6;border:1px solid #b9b9b9"></div>
<div class="t" style="left:579.64px;top:853.23px;font-size:17.5px;color:#2b2b2b;transform:scaleX(0.9350);transform-origin:0 0;">0.0 %</div>
<div class="t" style="left:771.36px;top:853.23px;font-size:17.5px;color:#2b2b2b;transform:scaleX(0.9600);transform-origin:0 0;">1</div>
<div class="t" style="left:853.60px;top:853.23px;font-size:17.5px;color:#2b2b2b;transform:scaleX(0.9600);transform-origin:0 0;">0</div>
<div class="t" style="left:886.20px;top:853.23px;font-size:17.5px;color:#2b2b2b;transform:scaleX(1.0400);transform-origin:0 0;">3/6/2022</div>
<div class="t" style="left:1030.70px;top:853.23px;font-size:17.5px;color:#2b2b2b;transform:scaleX(1.0400);transform-origin:0 0;">3/5/2022</div>
<div class="t" style="left:1175.30px;top:853.23px;font-size:17.5px;color:#2b2b2b;">schr</div>
</div>
<div class="a" style="left:1919.5px;top:314.5px;width:23.5px;height:866px;background:#f0f0f0"></div>
<div class="a" style="left:1920px;top:340px;width:22px;height:214px;background:#cdcdcd"></div>
<svg style="left:1924px;top:322.5px" width="14" height="10" viewBox="0 0 14 10"><path d="M1.5 8.5 L7 2.5 L12.5 8.5" fill="none" stroke="#555" stroke-width="1.8"/></svg>
<svg style="left:1924px;top:1162px" width="14" height="9" viewBox="0 0 14 9"><path d="M1 1 L7 7 L13 1" fill="none" stroke="#555" stroke-width="1.6"/></svg>
<div class="a" style="left:713.5px;top:1180.5px;width:1206px;height:23.5px;background:#f0f0f0"></div>
<div class="a" style="left:742px;top:1181px;width:856px;height:22px;background:#cdcdcd"></div>
<svg style="left:723px;top:1186px" width="9" height="14" viewBox="0 0 9 14"><path d="M8 1 L2 7 L8 13" fill="none" stroke="#555" stroke-width="1.6"/></svg>
<svg style="left:1901px;top:1186px" width="9" height="14" viewBox="0 0 9 14"><path d="M1 1 L7 7 L1 13" fill="none" stroke="#555" stroke-width="1.6"/></svg>
<div class="a" style="left:1919.5px;top:1180.5px;width:23.5px;height:24px;background:#f0f0f0"></div>
<div class="a" style="left:1947px;top:283px;width:1.5px;height:923px;background:#dcdcdc"></div>
<div class="a" style="left:2285px;top:292.6px;width:18.6px;height:17.4px;background:#efefef"></div>
<svg style="left:2288px;top:295px" width="12" height="12" viewBox="0 0 12 12"><path d="M1 1 L11 11 M11 1 L1 11" stroke="#555" stroke-width="1.4"/></svg>
<svg style="left:1957px;top:310px" width="43.68" height="22.75" viewBox="0 0 24 12.5"><path d="M0.3 4.2 L15.3 0.3 L23.7 2.6 V7.3 L10.2 12 L0.3 9.4 Z" fill="#c4c4c4" stroke="#c4c4c4" stroke-width="0.6" stroke-linejoin="round"/><path d="M0.3 4.2 L15.3 0.3 L23.7 2.6 L10.2 6.8 Z" fill="#e9e9e9"/><path d="M0.3 4.2 L10.2 6.8 V12 L0.3 9.4 Z" fill="#3a3a3a"/><path d="M10.2 6.8 L23.7 2.6 V7.3 L10.2 12 Z" fill="#b5b5b5"/><circle cx="8.3" cy="9.3" r="0.7" fill="#3c3"/></svg>
<div class="t" style="left:2005.64px;top:300.49px;font-size:26px;color:#1a1a1a;transform:scaleX(0.9324);transform-origin:0 0;">E:\</div>
<div class="t" style="left:1955.28px;top:348.29px;font-size:17.5px;color:#777777;transform:scaleX(1.0225);transform-origin:0 0;">Name:</div>
<div class="t" style="left:2079.11px;top:348.29px;font-size:17.5px;color:#222222;transform:scaleX(0.9947);transform-origin:0 0;">Documents (E:)</div>
<div class="t" style="left:1956.30px;top:379.39px;font-size:17.5px;color:#777777;transform:scaleX(1.0085);transform-origin:0 0;">Total size:</div>
<div class="t" style="left:2080.10px;top:379.39px;font-size:17.5px;color:#222222;transform:scaleX(0.9089);transform-origin:0 0;">7.8 GB</div>
<div class="t" style="left:1956.30px;top:410.49px;font-size:17.5px;color:#777777;transform:scaleX(0.9906);transform-origin:0 0;">Space free:</div>
<div class="t" style="left:2079.10px;top:410.49px;font-size:17.5px;color:#222222;">119.2 MB</div>
<div class="t" style="left:1955.32px;top:441.59px;font-size:17.5px;color:#777777;transform:scaleX(0.9794);transform-origin:0 0;">File system:</div>
<div class="t" style="left:2079.20px;top:441.59px;font-size:17.5px;color:#222222;transform:scaleX(0.9019);transform-origin:0 0;">NTFS</div>
<div class="t" style="left:2044.96px;top:837.69px;font-size:17.5px;color:#333;transform:scaleX(1.0409);transform-origin:0 0;">No preview available.</div>
<svg style="left:1372px;top:304px" width="16" height="24" viewBox="0 0 16 24"><path d="M1.3 1 V18.6 L5.7 14.2 L9 21.3 L11.6 20.1 L8.4 13.2 L14 13.2 Z" fill="#fff" stroke="#000" stroke-width="1.25" stroke-linejoin="miter"/></svg>
<div class="a" style="left:0px;top:1209px;width:2318px;height:33px;background:#f0f0f0;border-top:1px solid #dadada"></div>
<div class="a" style="left:0px;top:1242px;width:2318px;height:3px;background:#0d0d0d"></div>
<div class="a" style="left:421.4px;top:1212px;width:1px;height:29px;background:#d8d8d8"></div>
<div class="a" style="left:572.6px;top:1212px;width:1px;height:29px;background:#d8d8d8"></div>
<div class="a" style="left:723.4px;top:1212px;width:1px;height:29px;background:#d8d8d8"></div>
<div class="a" style="left:1807.4px;top:1212px;width:1px;height:29px;background:#d8d8d8"></div>
<div class="a" style="left:2276.6px;top:1212px;width:1px;height:29px;background:#d8d8d8"></div>
<div class="t" style="left:2.30px;top:1219.84px;font-size:17.2px;color:#222;transform:scaleX(0.9971);transform-origin:0 0;">Free space: 119 MB (of: 7.81 GB)</div>
<div class="t" style="left:427.50px;top:1219.64px;font-size:17.2px;color:#222;transform:scaleX(0.9906);transform-origin:0 0;">605 Files</div>
<div class="t" style="left:578.40px;top:1219.64px;font-size:17.2px;color:#222;transform:scaleX(0.9913);transform-origin:0 0;">0 Errors</div>
<div class="t" style="left:728.90px;top:1219.64px;font-size:17.2px;color:#222;">E:\Reihe Lisa\</div>
<svg style="left:1815px;top:1213px" width="26" height="25" viewBox="0 0 26 25"><path d="M16.70 10.00 L19.44 11.06 L18.81 13.44 L15.91 13.03 L14.88 14.38 L16.07 17.07 L13.94 18.31 L12.18 15.97 L10.50 16.20 L9.44 18.94 L7.06 18.31 L7.47 15.41 L6.12 14.38 L3.43 15.57 L2.19 13.44 L4.53 11.68 L4.30 10.00 L1.56 8.94 L2.19 6.56 L5.09 6.97 L6.12 5.62 L4.93 2.93 L7.06 1.69 L8.82 4.03 L10.50 3.80 L11.56 1.06 L13.94 1.69 L13.53 4.59 L14.88 5.62 L17.57 4.43 L18.81 6.56 L16.47 8.32 Z M13.30 10.00 A2.8 2.8 0 1 0 7.70 10.00 A2.8 2.8 0 1 0 13.30 10.00 Z" fill="#a9a9a9" fill-rule="evenodd"/><rect x="8.5" y="13.5" width="15" height="10" fill="#fff" stroke="#8a8a8a"/><path d="M11.5 18.5 L14.5 21 L20.5 15.5" fill="none" stroke="#2f8be0" stroke-width="1.8"/></svg>
<div class="t" style="left:1842.14px;top:1219.64px;font-size:17.2px;color:#222;transform:scaleX(0.9611);transform-origin:0 0;">MS SQL Server: VM-810\SPACEOBSERVER/SpaceObS...</div>
<svg style="left:2283px;top:1212px" width="28" height="26" viewBox="0 0 28 26"><path d="M3 3 L11 1 L18 3 V22 L10 24 L3 22 Z" fill="#a9aeb3"/><path d="M3 3 L10 5 V24 L3 22 Z" fill="#1e1e1e"/><path d="M19 15 L27 20 L19 25 Z" fill="#2f8be0"/></svg>
</body></html>
